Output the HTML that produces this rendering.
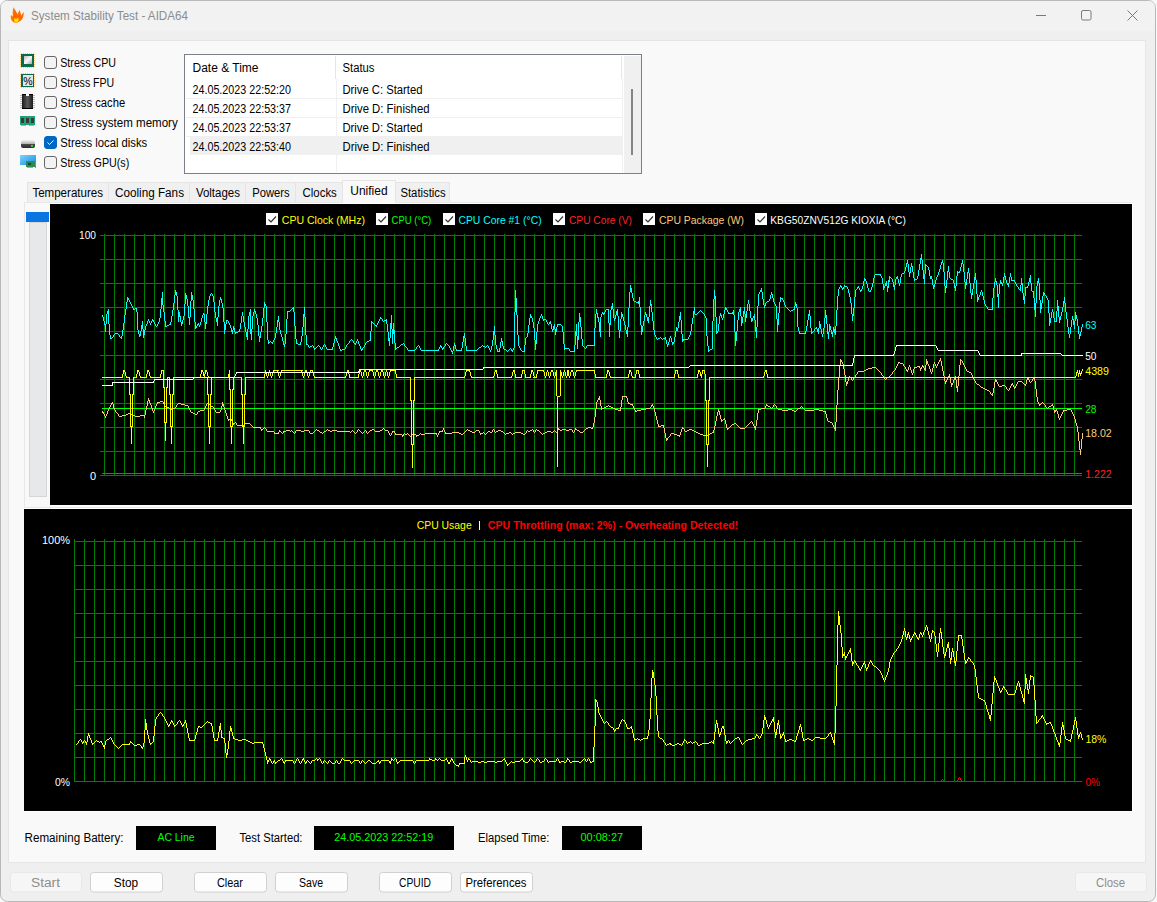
<!DOCTYPE html>
<html><head><meta charset="utf-8"><title>System Stability Test - AIDA64</title>
<style>html,body{margin:0;padding:0;background:#f8f8f8;width:1157px;height:902px;overflow:hidden}
svg{display:block;font-family:"Liberation Sans",sans-serif}</style></head>
<body><svg width="1157" height="902" viewBox="0 0 1157 902">
<rect x="0" y="0" width="1157" height="902" fill="#f8f8f8"/>
<rect x="0.5" y="0.5" width="1155" height="901" rx="7" ry="7" fill="#efefef" stroke="#b9b9b9" stroke-width="1"/>
<path d="M1,31 L1,8 Q1,1 8,1 L1148,1 Q1155,1 1155,8 L1155,31 Z" fill="#f2f2f2"/>
<path d="M16,23 C12,22.5 10,19 11,15 L13,16.5 C12.3,12.5 12.8,9.5 13.6,7.3 C15,10 17,12 17.2,14.5 C18,12.5 19,11 20,10 C20,12 20.7,13.5 21,15.5 L23.6,12 C24.5,16.5 22,21.5 16,23 Z" fill="#ff7a00"/>
<path d="M13.5,16 C14,13 14.5,11 14.2,9.5 C16,12 17.5,14 17.5,16 C19,14 20,13 20.2,12 C21,15 21.5,17 21,18 L22.8,15 C23,19 20,22 16,22.5 C13,22 12,19 13.5,16 Z" fill="#ff5500" opacity="0.6"/>
<path d="M16,22.8 C14,22.5 13.5,20 14.5,18 C15.5,19 17,19 18,17.5 C19,19 19.5,21.5 16,22.8 Z" fill="#ffe000"/>
<text x="31" y="20.3" font-size="13" fill="#8c8c8c" textLength="157" lengthAdjust="spacingAndGlyphs" >System Stability Test - AIDA64</text>
<rect x="1036" y="15" width="10" height="1" fill="#7a7a7a" />
<rect x="1081.5" y="10.5" width="9.5" height="9.5" rx="1.5" fill="none" stroke="#7a7a7a" stroke-width="1"/>
<path d="M1127.5,10.5 L1137.5,20.5 M1137.5,10.5 L1127.5,20.5" stroke="#7a7a7a" stroke-width="1"/>
<rect x="8.5" y="40.5" width="1137" height="822" fill="#f9f9f9" stroke="#e5e5e5" stroke-width="1"/>
<rect x="44.5" y="56.5" width="12" height="12" rx="2.5" fill="#f3f3f3" stroke="#666" stroke-width="1"/>
<text x="60.25" y="67.2" font-size="12" fill="#000" textLength="55.75" lengthAdjust="spacingAndGlyphs" >Stress CPU</text>
<rect x="44.5" y="76.5" width="12" height="12" rx="2.5" fill="#f3f3f3" stroke="#666" stroke-width="1"/>
<text x="60.25" y="87.2" font-size="12" fill="#000" textLength="54" lengthAdjust="spacingAndGlyphs" >Stress FPU</text>
<rect x="44.5" y="96.5" width="12" height="12" rx="2.5" fill="#f3f3f3" stroke="#666" stroke-width="1"/>
<text x="60.25" y="107.2" font-size="12" fill="#000" textLength="65" lengthAdjust="spacingAndGlyphs" >Stress cache</text>
<rect x="44.5" y="116.5" width="12" height="12" rx="2.5" fill="#f3f3f3" stroke="#666" stroke-width="1"/>
<text x="60.25" y="127.2" font-size="12" fill="#000" textLength="117.5" lengthAdjust="spacingAndGlyphs" >Stress system memory</text>
<rect x="44.5" y="136.5" width="12" height="12" rx="2.5" fill="#0067c0" stroke="#0067c0"/>
<path d="M47.5,142.5 L49.5,144.5 L53.5,140.5" fill="none" stroke="#fff" stroke-width="1"/>
<text x="60.25" y="147.2" font-size="12" fill="#000" textLength="87" lengthAdjust="spacingAndGlyphs" >Stress local disks</text>
<rect x="44.5" y="156.5" width="12" height="12" rx="2.5" fill="#f3f3f3" stroke="#666" stroke-width="1"/>
<text x="60.25" y="167.2" font-size="12" fill="#000" textLength="69" lengthAdjust="spacingAndGlyphs" >Stress GPU(s)</text>
<defs><linearGradient id="gcpu" x1="0" y1="0" x2="1" y2="1"><stop offset="0" stop-color="#bdbdbd"/><stop offset="0.5" stop-color="#f6f6f6"/><stop offset="1" stop-color="#a8a8a8"/></linearGradient><linearGradient id="gchip" x1="0" y1="0" x2="1" y2="0"><stop offset="0" stop-color="#1a1a1a"/><stop offset="0.5" stop-color="#5a5a5a"/><stop offset="1" stop-color="#1a1a1a"/></linearGradient><linearGradient id="gdisk" x1="0" y1="0" x2="0" y2="1"><stop offset="0" stop-color="#f4f4f4"/><stop offset="0.5" stop-color="#b0b0b0"/><stop offset="0.55" stop-color="#4a4a4a"/><stop offset="1" stop-color="#2a2a2a"/></linearGradient><linearGradient id="gmon" x1="0" y1="0" x2="1" y2="1"><stop offset="0" stop-color="#7fd0ff"/><stop offset="1" stop-color="#1090e0"/></linearGradient></defs>
<rect x="20" y="53" width="15" height="15" fill="#f0a030" opacity="0.55"/>
<path d="M20.5,53V68 M34.5,53V68 M20,53.5H35 M20,67.5H35" stroke="#f9f9f9" stroke-width="1" stroke-dasharray="1,1"/>
<rect x="21" y="54" width="13" height="13" fill="#0b6a4a"/>
<rect x="20" y="73" width="15" height="15" fill="#f0a030" opacity="0.55"/>
<path d="M20.5,73V88 M34.5,73V88 M20,73.5H35 M20,87.5H35" stroke="#f9f9f9" stroke-width="1" stroke-dasharray="1,1"/>
<rect x="21" y="74" width="13" height="13" fill="#0b6a4a"/>
<rect x="24" y="56" width="8" height="8" fill="url(#gcpu)"/>
<rect x="23" y="75" width="10" height="11" fill="#e6e6e6"/>
<text x="23.2" y="84.6" font-size="11" fill="#000" textLength="9.4" lengthAdjust="spacingAndGlyphs">%</text>
<path d="M21.5,95V108 M33.5,95V108" stroke="#ffffff" stroke-width="1" stroke-dasharray="1,1"/>
<path d="M21,95V108 M34,95V108" stroke="#222" stroke-width="0.6" stroke-dasharray="1,1"/>
<rect x="22" y="94" width="11" height="15" fill="url(#gchip)"/>
<rect x="22" y="94" width="11" height="1" fill="#000"/><rect x="22" y="108" width="11" height="1" fill="#000"/>
<rect x="26" y="94" width="3" height="2" fill="#f9f9f9"/>
<rect x="20" y="116" width="15" height="9" fill="#22a078"/>
<rect x="21" y="118" width="3" height="5" fill="#3a3a3a"/><rect x="26" y="118" width="3" height="5" fill="#3a3a3a"/><rect x="31" y="118" width="3" height="5" fill="#3a3a3a"/>
<rect x="21" y="125" width="5" height="1" fill="#d9a84a"/><rect x="29" y="125" width="5" height="1" fill="#d9a84a"/>
<rect x="21" y="140" width="14" height="8" rx="2" fill="url(#gdisk)"/>
<rect x="31" y="145" width="2" height="2" fill="#20e020"/>
<rect x="20" y="155" width="16" height="10" fill="url(#gmon)"/>
<rect x="26" y="161" width="10" height="6" fill="#2a8a5a"/>
<rect x="28" y="163" width="3" height="2" fill="#144a2a"/>
<rect x="27" y="167" width="6" height="1" fill="#f0a020"/>
<rect x="35" y="160" width="1" height="8" fill="#888"/>
<rect x="184.5" y="54.5" width="457" height="119" fill="#ffffff" stroke="#7c808a" stroke-width="1"/>
<rect x="624" y="56" width="17" height="117" fill="#f0f0f0" />
<rect x="631" y="89" width="2" height="66" fill="#858585" />
<rect x="335" y="56" width="1" height="23" fill="#e5e5e5" />
<rect x="621" y="56" width="1" height="23" fill="#e5e5e5" />
<rect x="336" y="79" width="1" height="93" fill="#f0f0f0" />
<rect x="622" y="79" width="1" height="93" fill="#f0f0f0" />
<text x="192.5" y="72" font-size="12" fill="#000" textLength="66" lengthAdjust="spacingAndGlyphs" >Date &amp; Time</text>
<text x="342.5" y="72" font-size="12" fill="#000" textLength="32" lengthAdjust="spacingAndGlyphs" >Status</text>
<rect x="186" y="98" width="436" height="1" fill="#efefef" />
<text x="192.5" y="93.8" font-size="12" fill="#000" textLength="98.5" lengthAdjust="spacingAndGlyphs" >24.05.2023 22:52:20</text>
<text x="342.5" y="93.8" font-size="12" fill="#000" textLength="80" lengthAdjust="spacingAndGlyphs" >Drive C: Started</text>
<rect x="186" y="117" width="436" height="1" fill="#efefef" />
<text x="192.5" y="112.8" font-size="12" fill="#000" textLength="98.5" lengthAdjust="spacingAndGlyphs" >24.05.2023 22:53:37</text>
<text x="342.5" y="112.8" font-size="12" fill="#000" textLength="87" lengthAdjust="spacingAndGlyphs" >Drive D: Finished</text>
<rect x="186" y="136" width="436" height="1" fill="#efefef" />
<text x="192.5" y="131.8" font-size="12" fill="#000" textLength="98.5" lengthAdjust="spacingAndGlyphs" >24.05.2023 22:53:37</text>
<text x="342.5" y="131.8" font-size="12" fill="#000" textLength="80" lengthAdjust="spacingAndGlyphs" >Drive D: Started</text>
<rect x="190" y="136" width="432" height="19" fill="#f0f0f0" />
<text x="192.5" y="150.8" font-size="12" fill="#000" textLength="98.5" lengthAdjust="spacingAndGlyphs" >24.05.2023 22:53:40</text>
<text x="342.5" y="150.8" font-size="12" fill="#000" textLength="87" lengthAdjust="spacingAndGlyphs" >Drive D: Finished</text>
<rect x="27.5" y="182.5" width="81" height="21" fill="#f0f0f0" stroke="#e5e5e5"/>
<text x="32.4" y="197" font-size="12" fill="#000" textLength="70.6" lengthAdjust="spacingAndGlyphs" >Temperatures</text>
<rect x="108.5" y="182.5" width="81" height="21" fill="#f0f0f0" stroke="#e5e5e5"/>
<text x="115" y="197" font-size="12" fill="#000" textLength="69" lengthAdjust="spacingAndGlyphs" >Cooling Fans</text>
<rect x="189.5" y="182.5" width="56" height="21" fill="#f0f0f0" stroke="#e5e5e5"/>
<text x="195.9" y="197" font-size="12" fill="#000" textLength="44.1" lengthAdjust="spacingAndGlyphs" >Voltages</text>
<rect x="245.5" y="182.5" width="50" height="21" fill="#f0f0f0" stroke="#e5e5e5"/>
<text x="252.3" y="197" font-size="12" fill="#000" textLength="37.3" lengthAdjust="spacingAndGlyphs" >Powers</text>
<rect x="295.5" y="182.5" width="47" height="21" fill="#f0f0f0" stroke="#e5e5e5"/>
<text x="302.6" y="197" font-size="12" fill="#000" textLength="34.2" lengthAdjust="spacingAndGlyphs" >Clocks</text>
<rect x="342.5" y="180.5" width="53" height="24" fill="#f9f9f9" stroke="#e5e5e5"/>
<text x="350.3" y="195" font-size="12" fill="#000" textLength="37.3" lengthAdjust="spacingAndGlyphs" >Unified</text>
<rect x="395.5" y="182.5" width="54" height="21" fill="#f0f0f0" stroke="#e5e5e5"/>
<text x="400.4" y="197" font-size="12" fill="#000" textLength="45.3" lengthAdjust="spacingAndGlyphs" >Statistics</text>
<rect x="24.5" y="202.5" width="1106" height="305" fill="#f9f9f9" stroke="#e8e8e8"/>
<rect x="343" y="202" width="52" height="2" fill="#f9f9f9" />
<rect x="50" y="203" width="1083" height="1" fill="#ffffff" />
<rect x="26" y="212" width="23" height="10" fill="#0a74e0" />
<rect x="29.5" y="222.5" width="17" height="274" fill="#e6e9ea" stroke="#d6d6d6"/>
<rect x="50" y="204" width="1082" height="301" fill="#000" />
<rect x="1132" y="204" width="1" height="302" fill="#fff" />
<rect x="50" y="505" width="1083" height="1" fill="#fff" />
<path d="M100,235.5H1082 M100,259.5H1082 M100,283.5H1082 M100,307.5H1082 M100,331.5H1082 M100,355.5H1082 M100,379.5H1082 M100,403.5H1082 M100,427.5H1082 M100,451.5H1082 M100,475.5H1082 M104.5,234V476 M114.5,234V476 M124.5,234V476 M134.5,234V476 M144.5,234V476 M154.5,234V476 M164.5,234V476 M174.5,234V476 M184.5,234V476 M194.5,234V476 M204.5,234V476 M214.5,234V476 M224.5,234V476 M234.5,234V476 M244.5,234V476 M254.5,234V476 M264.5,234V476 M274.5,234V476 M284.5,234V476 M294.5,234V476 M304.5,234V476 M314.5,234V476 M324.5,234V476 M334.5,234V476 M344.5,234V476 M354.5,234V476 M364.5,234V476 M374.5,234V476 M384.5,234V476 M394.5,234V476 M404.5,234V476 M414.5,234V476 M424.5,234V476 M434.5,234V476 M444.5,234V476 M454.5,234V476 M464.5,234V476 M474.5,234V476 M484.5,234V476 M494.5,234V476 M504.5,234V476 M514.5,234V476 M524.5,234V476 M534.5,234V476 M544.5,234V476 M554.5,234V476 M564.5,234V476 M574.5,234V476 M584.5,234V476 M594.5,234V476 M604.5,234V476 M614.5,234V476 M624.5,234V476 M634.5,234V476 M644.5,234V476 M654.5,234V476 M664.5,234V476 M674.5,234V476 M684.5,234V476 M694.5,234V476 M704.5,234V476 M714.5,234V476 M724.5,234V476 M734.5,234V476 M744.5,234V476 M754.5,234V476 M764.5,234V476 M774.5,234V476 M784.5,234V476 M794.5,234V476 M804.5,234V476 M814.5,234V476 M824.5,234V476 M834.5,234V476 M844.5,234V476 M854.5,234V476 M864.5,234V476 M874.5,234V476 M884.5,234V476 M894.5,234V476 M904.5,234V476 M914.5,234V476 M924.5,234V476 M934.5,234V476 M944.5,234V476 M954.5,234V476 M964.5,234V476 M974.5,234V476 M984.5,234V476 M994.5,234V476 M1004.5,234V476 M1014.5,234V476 M1024.5,234V476 M1034.5,234V476 M1044.5,234V476 M1054.5,234V476 M1064.5,234V476 M1074.5,234V476" stroke="#008000" stroke-width="1" shape-rendering="crispEdges"/>
<rect x="266" y="213" width="12" height="12" fill="#ffffff"/>
<path d="M268.5,219.5 L271,222 L276,216.5" fill="none" stroke="#333" stroke-width="1.2"/>
<text x="281.8" y="224" font-size="10.5" fill="#ffff00" textLength="83.2" lengthAdjust="spacingAndGlyphs" >CPU Clock (MHz)</text>
<rect x="376" y="213" width="12" height="12" fill="#ffffff"/>
<path d="M378.5,219.5 L381,222 L386,216.5" fill="none" stroke="#333" stroke-width="1.2"/>
<text x="391.6" y="224" font-size="10.5" fill="#00ff00" textLength="39.6" lengthAdjust="spacingAndGlyphs" >CPU (°C)</text>
<rect x="443" y="213" width="12" height="12" fill="#ffffff"/>
<path d="M445.5,219.5 L448,222 L453,216.5" fill="none" stroke="#333" stroke-width="1.2"/>
<text x="458.4" y="224" font-size="10.5" fill="#00ffff" textLength="83.2" lengthAdjust="spacingAndGlyphs" >CPU Core #1 (°C)</text>
<rect x="553" y="213" width="12" height="12" fill="#ffffff"/>
<path d="M555.5,219.5 L558,222 L563,216.5" fill="none" stroke="#333" stroke-width="1.2"/>
<text x="569" y="224" font-size="10.5" fill="#ff2020" textLength="62.9" lengthAdjust="spacingAndGlyphs" >CPU Core (V)</text>
<rect x="643" y="213" width="12" height="12" fill="#ffffff"/>
<path d="M645.5,219.5 L648,222 L653,216.5" fill="none" stroke="#333" stroke-width="1.2"/>
<text x="659" y="224" font-size="10.5" fill="#ffc878" textLength="85" lengthAdjust="spacingAndGlyphs" >CPU Package (W)</text>
<rect x="755" y="213" width="12" height="12" fill="#ffffff"/>
<path d="M757.5,219.5 L760,222 L765,216.5" fill="none" stroke="#333" stroke-width="1.2"/>
<text x="770.3" y="224" font-size="10.5" fill="#ffffff" textLength="135.5" lengthAdjust="spacingAndGlyphs" >KBG50ZNV512G KIOXIA (°C)</text>
<text x="96" y="239" font-size="11" fill="#fff" textLength="17" lengthAdjust="spacingAndGlyphs" text-anchor="end" >100</text>
<text x="96" y="480" font-size="11" fill="#fff" text-anchor="end" >0</text>
<text x="1085.2" y="329" font-size="11" fill="#00ffff" textLength="11.3" lengthAdjust="spacingAndGlyphs" >63</text>
<text x="1085.2" y="360" font-size="11" fill="#ffffff" textLength="11.3" lengthAdjust="spacingAndGlyphs" >50</text>
<text x="1085.2" y="375" font-size="11" fill="#ffff00" textLength="23.8" lengthAdjust="spacingAndGlyphs" >4389</text>
<text x="1085.2" y="413" font-size="11" fill="#00ff00" textLength="11.3" lengthAdjust="spacingAndGlyphs" >28</text>
<text x="1085.2" y="437" font-size="11" fill="#ffc878" textLength="26.6" lengthAdjust="spacingAndGlyphs" >18.02</text>
<text x="1085.2" y="478" font-size="11" fill="#ff2020" textLength="26.6" lengthAdjust="spacingAndGlyphs" >1.222</text>
<rect x="102" y="473" width="980" height="1" fill="#ff2020"/>
<rect x="102" y="408" width="980" height="1" fill="#00ff00"/>
<path d="M267 431h7v1h-7zM279 431h2v1h-2zM283 431h3v1h-3zM301 431h3v1h-3zM324 431h2v1h-2zM330 431h2v1h-2zM337 431h13v1h-13zM375 431h5v1h-5zM392 431h3v1h-3zM439 431h4v1h-4zM470 431h2v1h-2zM488 431h2v1h-2zM496 431h2v1h-2zM501 431h2v1h-2zM528 431h2v1h-2zM547 431h4v1h-4zM685 431h2v1h-2zM694 431h2v1h-2zM237 425h7v1h-7zM661 425h3v1h-3zM274 433h5v1h-5zM310 433h3v1h-3zM425 433h12v1h-12zM445 433h7v1h-7zM459 433h2v1h-2zM480 433h3v1h-3zM506 433h3v1h-3zM513 433h2v1h-2zM521 433h2v1h-2zM543 433h2v1h-2zM671 433h3v1h-3zM698 433h2v1h-2zM710 433h2v1h-2zM956 386h2v1h-2zM999 386h3v1h-3zM849 377h2v1h-2zM887 377h2v1h-2zM119 416h3v1h-3zM135 416h5v1h-5zM917 366h3v1h-3zM922 366h2v1h-2zM165 406h2v1h-2zM211 406h2v1h-2zM606 406h2v1h-2zM609 406h2v1h-2zM768 406h2v1h-2zM1049 406h2v1h-2zM200 410h4v1h-4zM618 410h3v1h-3zM637 410h4v1h-4zM782 410h6v1h-6zM792 410h2v1h-2zM805 410h9v1h-9zM819 410h4v1h-4zM1054 410h3v1h-3zM1063 410h4v1h-4zM864 370h2v1h-2zM906 370h2v1h-2zM253 427h8v1h-8zM588 427h3v1h-3zM754 427h2v1h-2zM834 427h2v1h-2zM181 404h4v1h-4zM208 404h2v1h-2zM222 404h2v1h-2zM630 404h3v1h-3zM1039 404h2v1h-2zM830 422h2v1h-2zM320 432h2v1h-2zM452 432h7v1h-7zM472 432h3v1h-3zM490 432h2v1h-2zM509 432h2v1h-2zM515 432h6v1h-6zM545 432h2v1h-2zM551 432h2v1h-2zM580 432h3v1h-3zM696 432h2v1h-2zM712 432h2v1h-2zM666 438h2v1h-2zM658 426h3v1h-3zM754 426h2v1h-2zM395 434h7v1h-7zM405 434h2v1h-2zM412 434h4v1h-4zM421 434h4v1h-4zM461 434h2v1h-2zM523 434h2v1h-2zM674 434h3v1h-3zM700 434h3v1h-3zM708 434h2v1h-2zM900 363h3v1h-3zM926 363h2v1h-2zM122 415h4v1h-4zM132 415h3v1h-3zM140 415h5v1h-5zM866 369h2v1h-2zM924 369h2v1h-2zM111 403h2v1h-2zM178 403h3v1h-3zM628 403h2v1h-2zM586 428h2v1h-2zM591 428h2v1h-2zM682 428h2v1h-2zM727 428h2v1h-2zM740 428h5v1h-5zM834 428h2v1h-2zM102 412h2v1h-2zM191 412h2v1h-2zM216 412h4v1h-4zM995 380h2v1h-2zM868 368h4v1h-4zM920 368h2v1h-2zM924 368h2v1h-2zM128 413h2v1h-2zM193 413h2v1h-2zM840 360h2v1h-2zM939 360h2v1h-2zM960 360h2v1h-2zM171 409h2v1h-2zM615 409h3v1h-3zM641 409h5v1h-5zM758 409h3v1h-3zM778 409h4v1h-4zM788 409h4v1h-4zM814 409h5v1h-5zM1067 409h4v1h-4zM985 389h2v1h-2zM286 430h4v1h-4zM296 430h5v1h-5zM304 430h5v1h-5zM317 430h2v1h-2zM328 430h2v1h-2zM332 430h5v1h-5zM370 430h2v1h-2zM380 430h2v1h-2zM385 430h3v1h-3zM468 430h2v1h-2zM476 430h3v1h-3zM498 430h3v1h-3zM530 430h2v1h-2zM537 430h2v1h-2zM560 430h2v1h-2zM566 430h3v1h-3zM577 430h2v1h-2zM687 430h2v1h-2zM692 430h2v1h-2zM233 423h2v1h-2zM244 423h6v1h-6zM734 423h2v1h-2zM948 376h2v1h-2zM185 405h3v1h-3zM222 405h2v1h-2zM651 405h2v1h-2zM766 405h2v1h-2zM1051 405h2v1h-2zM732 424h2v1h-2zM969 372h2v1h-2zM956 387h2v1h-2zM981 387h2v1h-2zM1014 387h2v1h-2zM1079 449h2v1h-2zM858 371h6v1h-6zM967 371h2v1h-2zM261 429h2v1h-2zM372 429h2v1h-2zM558 429h2v1h-2zM562 429h4v1h-4zM569 429h3v1h-3zM575 429h2v1h-2zM689 429h3v1h-3zM846 383h2v1h-2zM951 383h2v1h-2zM228 419h2v1h-2zM723 419h2v1h-2zM126 414h2v1h-2zM130 414h2v1h-2zM195 414h2v1h-2zM846 382h2v1h-2zM945 381h2v1h-2zM995 381h2v1h-2zM1018 381h4v1h-4zM991 394h2v1h-2zM157 402h3v1h-3zM951 384h2v1h-2zM977 384h2v1h-2zM1011 384h2v1h-2zM1024 384h2v1h-2zM987 390h2v1h-2zM198 411h2v1h-2zM635 411h2v1h-2zM718 411h2v1h-2zM794 411h2v1h-2zM823 411h3v1h-3zM1054 411h2v1h-2zM167 407h2v1h-2zM604 407h2v1h-2zM611 407h2v1h-2zM721 420h2v1h-2zM160 401h3v1h-3zM622 396h5v1h-5zM666 439h2v1h-2zM169 408h2v1h-2zM173 408h2v1h-2zM601 408h3v1h-3zM613 408h2v1h-2zM646 408h4v1h-4zM761 408h4v1h-4zM798 408h2v1h-2zM828 421h2v1h-2zM598 399h2v1h-2zM898 362h2v1h-2zM926 362h2v1h-2zM954 378h2v1h-2zM1027 378h2v1h-2zM1033 378h2v1h-2zM402 435h2v1h-2zM416 435h3v1h-3zM677 435h3v1h-3zM703 435h5v1h-5zM983 388h2v1h-2zM872 367h4v1h-4zM914 367h3v1h-3zM1002 385h3v1h-3zM954 379h2v1h-2zM1027 379h2v1h-2zM840 361h2v1h-2zM926 361h2v1h-2zM598 398h2v1h-2zM148 400h2v1h-2zM492 430h1v2h-1zM1026 380h1v4h-1zM835 422h1v5h-1zM835 429h1v2h-1zM668 437h1v1h-1zM1045 405h1v2h-1zM1037 397h1v5h-1zM1078 432h1v9h-1zM114 408h1v2h-1zM721 419h1v1h-1zM721 421h1v1h-1zM1048 407h1v1h-1zM913 369h1v4h-1zM905 367h1v2h-1zM756 420h1v6h-1zM1011 385h1v1h-1zM1082 433h1v6h-1zM717 412h1v4h-1zM714 426h1v4h-1zM600 400h1v6h-1zM1052 404h1v1h-1zM1081 439h1v10h-1zM855 375h1v2h-1zM1060 416h1v2h-1zM1034 377h1v1h-1zM1034 379h1v2h-1zM958 376h1v10h-1zM942 366h1v5h-1zM382 429h1v1h-1zM1041 403h1v1h-1zM840 359h1v1h-1zM840 362h1v4h-1zM751 421h1v1h-1zM110 405h1v2h-1zM322 433h1v1h-1zM596 402h1v7h-1zM444 430h1v2h-1zM771 408h1v1h-1zM102 411h1v1h-1zM1074 416h1v3h-1zM774 404h1v1h-1zM920 369h1v2h-1zM943 371h1v5h-1zM752 422h1v2h-1zM912 373h1v2h-1zM657 420h1v4h-1zM775 405h1v1h-1zM932 368h1v4h-1zM713 430h1v2h-1zM800 407h1v1h-1zM368 432h1v1h-1zM420 433h1v1h-1zM653 406h1v2h-1zM725 420h1v4h-1zM151 405h1v3h-1zM844 369h1v6h-1zM265 428h1v1h-1zM204 408h1v2h-1zM957 388h1v4h-1zM1044 404h1v1h-1zM656 416h1v4h-1zM664 428h1v5h-1zM279 430h1v1h-1zM113 404h1v4h-1zM950 377h1v6h-1zM1077 426h1v6h-1zM962 361h1v2h-1zM881 373h1v2h-1zM892 372h1v2h-1zM595 409h1v8h-1zM1058 414h1v4h-1zM827 418h1v3h-1zM105 416h1v2h-1zM147 401h1v5h-1zM843 364h1v5h-1zM534 432h1v1h-1zM885 379h1v1h-1zM283 432h1v1h-1zM938 362h1v2h-1zM264 427h1v1h-1zM146 406h1v4h-1zM908 367h1v3h-1zM826 414h1v4h-1zM1025 385h1v1h-1zM177 404h1v1h-1zM313 432h1v1h-1zM839 366h1v12h-1zM1039 405h1v1h-1zM965 367h1v2h-1zM116 412h1v1h-1zM222 402h1v2h-1zM553 431h1v1h-1zM746 426h1v1h-1zM854 377h1v1h-1zM526 431h1v2h-1zM766 404h1v1h-1zM117 413h1v1h-1zM1059 418h1v2h-1zM1080 450h1v5h-1zM946 380h1v1h-1zM404 433h1v1h-1zM994 382h1v6h-1zM226 413h1v3h-1zM931 372h1v2h-1zM594 417h1v6h-1zM838 378h1v12h-1zM104 414h1v2h-1zM572 430h1v2h-1zM583 431h1v1h-1zM720 415h1v4h-1zM889 376h1v1h-1zM355 433h1v1h-1zM1036 389h1v8h-1zM511 433h1v1h-1zM956 380h1v6h-1zM155 406h1v3h-1zM556 432h1v1h-1zM533 430h1v2h-1zM439 432h1v1h-1zM670 434h1v2h-1zM1032 379h1v2h-1zM359 430h1v1h-1zM945 382h1v2h-1zM682 427h1v1h-1zM738 426h1v1h-1zM715 421h1v5h-1zM1010 386h1v2h-1zM919 367h1v1h-1zM833 425h1v2h-1zM716 416h1v5h-1zM911 370h1v3h-1zM351 431h1v1h-1zM719 412h1v3h-1zM739 427h1v1h-1zM857 372h1v2h-1zM655 412h1v4h-1zM1046 407h1v1h-1zM964 365h1v2h-1zM115 410h1v2h-1zM626 397h1v1h-1zM363 432h1v1h-1zM260 428h1v1h-1zM1047 408h1v1h-1zM995 379h1v1h-1zM953 380h1v3h-1zM937 364h1v2h-1zM599 396h1v2h-1zM757 413h1v7h-1zM895 368h1v2h-1zM358 429h1v1h-1zM621 400h1v7h-1zM884 377h1v2h-1zM949 374h1v2h-1zM930 369h1v3h-1zM979 385h1v1h-1zM750 422h1v1h-1zM665 433h1v5h-1zM540 432h1v1h-1zM278 432h1v1h-1zM658 424h1v2h-1zM776 406h1v2h-1zM407 433h1v1h-1zM914 368h1v1h-1zM541 433h1v1h-1zM1079 441h1v8h-1zM765 406h1v2h-1zM777 408h1v1h-1zM926 359h1v2h-1zM926 364h1v1h-1zM681 429h1v3h-1zM408 434h1v1h-1zM419 434h1v1h-1zM1061 414h1v2h-1zM652 404h1v1h-1zM998 384h1v2h-1zM150 403h1v2h-1zM876 368h1v1h-1zM1029 380h1v2h-1zM1073 414h1v2h-1zM758 410h1v3h-1zM845 375h1v7h-1zM963 363h1v2h-1zM411 435h1v1h-1zM877 369h1v1h-1zM1035 381h1v8h-1zM944 376h1v5h-1zM993 388h1v5h-1zM730 426h1v1h-1zM941 361h1v5h-1zM773 405h1v2h-1zM281 432h1v1h-1zM438 433h1v2h-1zM1057 411h1v3h-1zM1076 423h1v3h-1zM207 403h1v1h-1zM975 381h1v2h-1zM933 364h1v4h-1zM680 432h1v3h-1zM837 390h1v15h-1zM282 433h1v1h-1zM601 406h1v2h-1zM601 409h1v1h-1zM483 432h1v1h-1zM366 431h1v2h-1zM1009 388h1v2h-1zM959 365h1v11h-1zM225 410h1v3h-1zM233 424h1v1h-1zM244 424h1v1h-1zM654 408h1v4h-1zM853 378h1v2h-1zM960 359h1v1h-1zM960 361h1v4h-1zM266 429h1v2h-1zM445 432h1v1h-1zM593 423h1v4h-1zM156 404h1v2h-1zM836 405h1v17h-1zM145 410h1v5h-1zM997 382h1v2h-1zM891 374h1v1h-1zM955 376h1v2h-1zM357 430h1v2h-1zM221 406h1v4h-1zM149 401h1v2h-1zM934 362h1v2h-1zM1038 402h1v2h-1zM1072 412h1v2h-1zM1053 406h1v4h-1zM464 432h1v1h-1zM118 414h1v2h-1zM1031 381h1v1h-1zM536 429h1v1h-1zM319 431h1v1h-1zM236 423h1v2h-1zM144 416h1v2h-1zM176 405h1v2h-1zM164 404h1v2h-1zM573 432h1v1h-1zM326 430h1v1h-1zM388 431h1v2h-1zM365 430h1v1h-1zM620 407h1v3h-1zM224 407h1v3h-1zM232 421h1v2h-1zM494 430h1v2h-1zM748 424h1v1h-1zM684 429h1v2h-1zM925 365h1v3h-1zM925 370h1v1h-1zM391 433h1v2h-1zM745 427h1v1h-1zM718 409h1v2h-1zM627 398h1v4h-1zM992 393h1v1h-1zM992 395h1v1h-1zM214 408h1v2h-1zM403 434h1v1h-1zM910 367h1v3h-1zM206 404h1v2h-1zM679 436h1v1h-1zM585 429h1v1h-1zM228 420h1v1h-1zM974 379h1v2h-1zM849 376h1v1h-1zM190 410h1v2h-1zM163 402h1v2h-1zM107 411h1v3h-1zM669 436h1v1h-1zM898 363h1v1h-1zM592 427h1v1h-1zM360 431h1v1h-1zM726 424h1v4h-1zM929 366h1v3h-1zM1056 409h1v1h-1zM1075 419h1v4h-1zM848 378h1v3h-1zM361 432h1v1h-1zM1015 386h1v1h-1zM220 410h1v2h-1zM295 431h1v2h-1zM261 430h1v1h-1zM437 435h1v2h-1zM936 366h1v2h-1zM323 432h1v1h-1zM894 370h1v1h-1zM1071 410h1v2h-1zM410 436h1v1h-1zM383 428h1v1h-1zM878 370h1v1h-1zM729 427h1v1h-1zM235 422h1v1h-1zM227 416h1v3h-1zM291 430h1v1h-1zM879 371h1v1h-1zM197 412h1v2h-1zM292 431h1v1h-1zM314 431h1v1h-1zM189 408h1v2h-1zM512 434h1v1h-1zM443 428h1v2h-1zM390 435h1v1h-1zM980 386h1v1h-1zM231 419h1v2h-1zM940 358h1v2h-1zM1063 411h1v1h-1zM466 430h1v1h-1zM886 378h1v1h-1zM152 408h1v3h-1zM856 374h1v1h-1zM250 424h1v1h-1zM542 434h1v1h-1zM436 434h1v1h-1zM935 364h1v2h-1zM409 435h1v1h-1zM535 430h1v2h-1zM622 397h1v3h-1zM966 369h1v2h-1zM797 409h1v1h-1zM1030 382h1v1h-1zM109 407h1v2h-1zM663 426h1v2h-1zM897 364h1v2h-1zM148 398h1v2h-1zM634 408h1v2h-1zM801 406h1v1h-1zM909 365h1v2h-1zM973 377h1v2h-1zM352 430h1v1h-1zM1014 388h1v1h-1zM394 432h1v1h-1zM367 433h1v1h-1zM755 428h1v2h-1zM493 429h1v1h-1zM485 434h1v1h-1zM356 432h1v1h-1zM223 406h1v1h-1zM736 424h1v1h-1zM557 430h1v2h-1zM215 410h1v2h-1zM154 409h1v2h-1zM1006 387h1v2h-1zM1007 389h1v1h-1zM976 383h1v1h-1zM724 418h1v1h-1zM389 433h1v2h-1zM851 378h1v2h-1zM727 429h1v1h-1zM484 433h1v1h-1zM882 375h1v1h-1zM747 425h1v1h-1zM1013 385h1v2h-1zM847 381h1v1h-1zM1022 382h1v1h-1zM846 384h1v2h-1zM527 430h1v1h-1zM923 367h1v1h-1zM230 418h1v1h-1zM525 433h1v1h-1zM108 409h1v2h-1zM893 371h1v1h-1zM503 432h1v1h-1zM633 406h1v2h-1zM939 361h1v1h-1zM1062 412h1v2h-1zM309 431h1v2h-1zM972 375h1v2h-1zM374 430h1v1h-1zM666 440h1v1h-1zM188 406h1v2h-1zM651 406h1v1h-1zM293 432h1v1h-1zM263 428h1v1h-1zM904 366h1v1h-1zM442 430h1v1h-1zM1017 382h1v2h-1zM294 433h1v1h-1zM990 392h1v2h-1zM350 432h1v1h-1zM495 432h1v1h-1zM153 411h1v2h-1zM896 366h1v2h-1zM579 431h1v1h-1zM362 433h1v1h-1zM731 425h1v1h-1zM770 407h1v1h-1zM480 434h1v1h-1zM1005 386h1v1h-1zM290 431h1v1h-1zM796 410h1v1h-1zM274 432h1v1h-1zM903 364h1v2h-1zM475 431h1v1h-1zM369 431h1v1h-1zM632 405h1v1h-1zM487 432h1v1h-1zM907 371h1v1h-1zM971 373h1v2h-1zM112 402h1v1h-1zM465 431h1v1h-1zM803 408h1v1h-1zM922 365h1v1h-1zM575 428h1v1h-1zM753 424h1v2h-1zM804 409h1v1h-1zM989 391h1v1h-1zM948 377h1v1h-1zM252 426h1v1h-1zM316 429h1v1h-1zM327 429h1v1h-1zM1042 402h1v1h-1zM772 407h1v1h-1zM1027 377h1v1h-1zM1043 403h1v1h-1zM749 423h1v1h-1zM384 429h1v1h-1zM1054 412h1v1h-1zM1016 384h1v2h-1zM880 372h1v1h-1zM1008 390h1v1h-1zM558 428h1v1h-1zM802 407h1v1h-1zM842 362h1v2h-1zM402 436h1v1h-1zM1012 383h1v1h-1zM395 433h1v1h-1zM532 429h1v1h-1zM251 425h1v1h-1zM479 431h1v2h-1zM825 412h1v2h-1zM210 405h1v1h-1zM106 414h1v2h-1zM574 430h1v2h-1zM628 402h1v1h-1zM213 407h1v1h-1zM111 404h1v1h-1zM635 410h1v1h-1zM175 407h1v1h-1zM392 432h1v1h-1zM921 367h1v1h-1zM353 431h1v1h-1zM364 431h1v1h-1zM951 385h1v2h-1zM597 400h1v2h-1zM554 430h1v1h-1zM852 380h1v1h-1zM354 432h1v1h-1zM157 403h1v1h-1zM555 431h1v1h-1zM883 376h1v1h-1zM947 378h1v2h-1zM205 406h1v2h-1zM463 433h1v1h-1zM928 364h1v2h-1zM1023 383h1v1h-1zM737 425h1v1h-1zM890 375h1v1h-1zM584 430h1v1h-1zM832 423h1v2h-1zM608 405h1v1h-1zM504 433h1v1h-1zM650 407h1v1h-1zM505 434h1v1h-1zM906 369h1v1h-1zM103 413h1v1h-1zM315 430h1v1h-1zM539 431h1v1h-1zM416 436h1v1h-1zM486 433h1v1h-1zM467 429h1v1h-1z" fill="#ffc878" shape-rendering="crispEdges"/>
<path d="M123 370h2v1h-2zM137 370h2v1h-2zM147 370h2v1h-2zM161 370h3v1h-3zM201 370h2v1h-2zM205 370h2v1h-2zM273 370h6v1h-6zM281 370h22v1h-22zM305 370h2v1h-2zM310 370h3v1h-3zM347 370h2v1h-2zM359 370h2v1h-2zM364 370h2v1h-2zM369 370h4v1h-4zM376 370h2v1h-2zM381 370h2v1h-2zM390 370h6v1h-6zM466 370h4v1h-4zM495 370h2v1h-2zM513 370h2v1h-2zM522 370h3v1h-3zM531 370h2v1h-2zM537 370h7v1h-7zM551 370h2v1h-2zM567 370h2v1h-2zM571 370h2v1h-2zM576 370h19v1h-19zM607 370h2v1h-2zM629 370h2v1h-2zM636 370h3v1h-3zM675 370h3v1h-3zM698 370h2v1h-2zM702 370h3v1h-3zM765 370h2v1h-2zM102 377h21v1h-21zM126 377h4v1h-4zM133 377h4v1h-4zM140 377h7v1h-7zM150 377h11v1h-11zM167 377h3v1h-3zM173 377h28v1h-28zM207 377h2v1h-2zM211 377h19v1h-19zM233 377h9v1h-9zM245 377h20v1h-20zM314 377h32v1h-32zM349 377h10v1h-10zM396 377h15v1h-15zM414 377h51v1h-51zM471 377h23v1h-23zM497 377h15v1h-15zM515 377h7v1h-7zM525 377h6v1h-6zM533 377h4v1h-4zM595 377h12v1h-12zM610 377h19v1h-19zM632 377h4v1h-4zM639 377h36v1h-36zM678 377h20v1h-20zM709 377h55v1h-55zM767 377h309v1h-309zM203 375h2v1h-2zM228 375h2v1h-2zM555 375h2v1h-2zM560 375h2v1h-2zM567 375h2v1h-2zM700 375h2v1h-2zM265 373h2v1h-2zM555 373h2v1h-2zM560 373h2v1h-2zM567 373h2v1h-2zM1078 373h4v1h-4zM411 444h3v1h-3zM706 444h3v1h-3zM123 371h2v1h-2zM137 371h2v1h-2zM147 371h2v1h-2zM201 371h2v1h-2zM205 371h2v1h-2zM305 371h2v1h-2zM347 371h2v1h-2zM359 371h2v1h-2zM364 371h2v1h-2zM376 371h2v1h-2zM381 371h2v1h-2zM495 371h2v1h-2zM513 371h2v1h-2zM531 371h2v1h-2zM551 371h2v1h-2zM567 371h2v1h-2zM571 371h2v1h-2zM607 371h2v1h-2zM629 371h2v1h-2zM698 371h2v1h-2zM765 371h2v1h-2zM203 374h2v1h-2zM228 374h2v1h-2zM555 374h2v1h-2zM560 374h2v1h-2zM567 374h2v1h-2zM700 374h2v1h-2zM265 372h2v1h-2zM555 372h2v1h-2zM560 372h2v1h-2zM567 372h2v1h-2zM1076 372h2v1h-2zM410 400h2v1h-2zM413 400h2v1h-2zM705 400h2v1h-2zM708 400h2v1h-2zM163 387h2v1h-2zM166 387h2v1h-2zM228 376h2v1h-2zM129 394h2v1h-2zM132 394h2v1h-2zM169 394h2v1h-2zM172 394h2v1h-2zM207 394h2v1h-2zM210 394h2v1h-2zM241 394h2v1h-2zM244 394h2v1h-2zM557 396h3v1h-3zM164 422h3v1h-3zM229 389h2v1h-2zM232 389h2v1h-2zM130 426h3v1h-3zM170 426h3v1h-3zM208 426h3v1h-3zM230 426h3v1h-3zM242 426h3v1h-3zM389 372h1v4h-1zM232 390h1v36h-1zM170 395h1v31h-1zM163 371h1v16h-1zM410 378h1v22h-1zM231 427h1v17h-1zM706 401h1v43h-1zM557 397h1v70h-1zM764 372h1v4h-1zM132 395h1v31h-1zM133 378h1v16h-1zM208 376h1v1h-1zM208 395h1v31h-1zM242 395h1v31h-1zM414 378h1v22h-1zM269 370h1v2h-1zM361 372h1v4h-1zM412 445h1v23h-1zM413 401h1v43h-1zM573 372h1v4h-1zM270 372h1v4h-1zM165 423h1v18h-1zM166 388h1v34h-1zM131 427h1v17h-1zM137 372h1v2h-1zM230 390h1v36h-1zM524 371h1v3h-1zM307 372h1v4h-1zM308 376h1v2h-1zM562 376h1v2h-1zM708 401h1v43h-1zM638 371h1v3h-1zM167 378h1v9h-1zM547 370h1v2h-1zM379 376h1v2h-1zM705 374h1v26h-1zM129 378h1v16h-1zM173 378h1v16h-1zM281 371h1v1h-1zM493 376h1v1h-1zM139 372h1v4h-1zM698 372h1v2h-1zM709 378h1v22h-1zM565 372h1v4h-1zM210 395h1v31h-1zM707 445h1v22h-1zM466 371h1v1h-1zM243 427h1v17h-1zM130 395h1v31h-1zM383 372h1v4h-1zM172 395h1v31h-1zM411 401h1v43h-1zM375 372h1v4h-1zM554 376h1v2h-1zM211 378h1v16h-1zM169 378h1v16h-1zM244 395h1v31h-1zM245 378h1v16h-1zM272 372h1v4h-1zM241 378h1v16h-1zM702 371h1v3h-1zM209 427h1v17h-1zM264 374h1v3h-1zM1077 370h1v2h-1zM385 372h1v4h-1zM123 372h1v2h-1zM469 371h1v1h-1zM556 370h1v2h-1zM556 376h1v20h-1zM164 388h1v34h-1zM470 372h1v4h-1zM203 372h1v2h-1zM560 370h1v2h-1zM560 376h1v20h-1zM374 376h1v2h-1zM207 372h1v4h-1zM207 378h1v16h-1zM704 371h1v3h-1zM233 378h1v11h-1zM309 372h1v4h-1zM171 427h1v17h-1zM229 370h1v4h-1zM229 378h1v11h-1zM564 370h1v2h-1zM522 371h1v3h-1zM1081 371h1v2h-1zM636 371h1v3h-1zM278 372h1v4h-1zM533 372h1v4h-1zM358 374h1v3h-1zM570 372h1v4h-1zM563 372h1v4h-1zM521 374h1v3h-1zM388 376h1v2h-1zM514 372h1v2h-1zM1080 374h1v2h-1zM677 371h1v3h-1zM635 374h1v3h-1zM373 372h1v4h-1zM312 371h1v1h-1zM574 376h1v2h-1zM700 372h1v2h-1zM304 372h1v4h-1zM201 372h1v2h-1zM767 374h1v3h-1zM265 370h1v2h-1zM387 372h1v4h-1zM550 372h1v4h-1zM629 372h1v2h-1zM368 372h1v4h-1zM531 372h1v2h-1zM553 372h1v4h-1zM766 372h1v2h-1zM530 374h1v3h-1zM301 371h1v1h-1zM594 371h1v3h-1zM471 376h1v1h-1zM494 372h1v4h-1zM536 374h1v3h-1zM395 371h1v3h-1zM631 372h1v4h-1zM303 376h1v2h-1zM268 372h1v4h-1zM701 376h1v2h-1zM348 372h1v2h-1zM378 372h1v4h-1zM549 376h1v2h-1zM576 371h1v1h-1zM302 372h1v4h-1zM126 376h1v1h-1zM465 372h1v4h-1zM544 372h1v4h-1zM149 372h1v4h-1zM271 376h1v2h-1zM140 376h1v1h-1zM346 372h1v4h-1zM566 376h1v2h-1zM497 374h1v3h-1zM277 371h1v1h-1zM569 376h1v2h-1zM1078 374h1v3h-1zM512 372h1v4h-1zM675 371h1v3h-1zM204 376h1v2h-1zM280 372h1v4h-1zM367 376h1v2h-1zM359 372h1v2h-1zM147 372h1v2h-1zM310 371h1v1h-1zM610 376h1v1h-1zM200 374h1v3h-1zM632 376h1v1h-1zM496 372h1v2h-1zM363 372h1v4h-1zM146 374h1v3h-1zM575 372h1v4h-1zM313 372h1v4h-1zM534 376h1v1h-1zM267 376h1v2h-1zM697 374h1v3h-1zM161 371h1v3h-1zM548 372h1v4h-1zM366 372h1v4h-1zM525 374h1v3h-1zM384 376h1v2h-1zM1076 373h1v3h-1zM122 374h1v3h-1zM266 374h1v2h-1zM380 372h1v4h-1zM314 376h1v1h-1zM1082 369h1v2h-1zM390 371h1v1h-1zM136 374h1v3h-1zM349 374h1v3h-1zM546 372h1v4h-1zM515 374h1v3h-1zM674 374h1v3h-1zM279 376h1v2h-1zM609 372h1v4h-1zM464 376h1v1h-1zM628 374h1v3h-1zM396 374h1v3h-1zM543 371h1v1h-1zM125 372h1v4h-1zM345 376h1v1h-1zM372 371h1v1h-1zM595 374h1v3h-1zM606 374h1v3h-1zM386 370h1v2h-1zM678 374h1v3h-1zM545 376h1v2h-1zM537 371h1v3h-1zM362 376h1v2h-1zM639 374h1v3h-1zM160 374h1v3h-1zM1079 370h1v3h-1zM205 372h1v2h-1zM763 376h1v1h-1zM273 371h1v1h-1zM607 372h1v2h-1zM150 376h1v1h-1zM1075 376h1v1h-1zM369 371h1v1h-1zM511 376h1v1h-1z" fill="#ffff00" shape-rendering="crispEdges"/>
<path d="M483 367h206v1h-206zM359 369h124v1h-124zM690 365h163v1h-163zM938 350h40v1h-40zM154 379h39v1h-39zM112 382h42v1h-42zM854 355h40v1h-40zM980 355h42v1h-42zM1062 355h21v1h-21zM236 372h123v1h-123zM896 345h40v1h-40zM193 377h42v1h-42zM102 385h11v1h-11zM1021 353h40v1h-40zM895 347h1v4h-1zM112 383h1v2h-1zM893 354h1v1h-1zM193 378h1v1h-1zM854 356h1v2h-1zM853 358h1v5h-1zM936 346h1v2h-1zM894 351h1v3h-1zM979 353h1v2h-1zM896 346h1v1h-1zM154 380h1v1h-1zM978 351h1v2h-1zM235 374h1v2h-1zM234 376h1v1h-1zM236 373h1v1h-1zM153 381h1v1h-1zM852 363h1v2h-1zM358 371h1v1h-1zM359 370h1v1h-1zM937 348h1v2h-1zM483 368h1v1h-1zM1061 354h1v1h-1zM1021 354h1v1h-1zM689 366h1v1h-1z" fill="#ffffff" shape-rendering="crispEdges"/>
<path d="M107 313h2v1h-2zM178 313h2v1h-2zM249 313h2v1h-2zM596 313h2v1h-2zM602 313h3v1h-3zM616 313h2v1h-2zM693 313h2v1h-2zM728 313h6v1h-6zM743 313h2v1h-2zM161 303h2v1h-2zM515 303h2v1h-2zM638 303h2v1h-2zM1034 303h2v1h-2zM1040 303h2v1h-2zM178 315h2v1h-2zM249 315h2v1h-2zM303 315h2v1h-2zM621 315h2v1h-2zM720 315h2v1h-2zM745 315h2v1h-2zM808 315h2v1h-2zM825 315h2v1h-2zM852 315h2v1h-2zM1075 315h2v1h-2zM216 321h2v1h-2zM277 321h2v1h-2zM579 321h2v1h-2zM741 321h2v1h-2zM777 321h2v1h-2zM1049 321h2v1h-2zM1054 321h3v1h-3zM1073 321h2v1h-2zM141 328h2v1h-2zM224 328h2v1h-2zM233 328h2v1h-2zM390 328h2v1h-2zM553 328h2v1h-2zM599 328h2v1h-2zM641 328h2v1h-2zM676 328h2v1h-2zM755 328h2v1h-2zM815 328h2v1h-2zM829 328h2v1h-2zM110 338h2v1h-2zM335 338h2v1h-2zM388 338h2v1h-2zM577 338h2v1h-2zM658 338h2v1h-2zM663 338h3v1h-3zM735 338h2v1h-2zM369 340h2v1h-2zM388 340h2v1h-2zM535 340h2v1h-2zM682 340h2v1h-2zM735 340h2v1h-2zM923 276h2v1h-2zM930 276h2v1h-2zM1004 276h2v1h-2zM178 314h2v1h-2zM203 314h2v1h-2zM249 314h2v1h-2zM303 314h2v1h-2zM616 314h2v1h-2zM621 314h2v1h-2zM645 314h2v1h-2zM695 314h2v1h-2zM745 314h2v1h-2zM808 314h2v1h-2zM852 314h2v1h-2zM185 296h2v1h-2zM191 296h2v1h-2zM714 296h2v1h-2zM997 296h2v1h-2zM1023 296h2v1h-2zM188 317h2v1h-2zM530 317h2v1h-2zM579 317h2v1h-2zM597 317h2v1h-2zM647 317h2v1h-2zM679 317h2v1h-2zM741 317h2v1h-2zM745 317h2v1h-2zM753 317h2v1h-2zM825 317h2v1h-2zM1059 317h2v1h-2zM1075 317h2v1h-2zM264 305h2v1h-2zM515 305h2v1h-2zM650 305h2v1h-2zM764 305h2v1h-2zM795 305h2v1h-2zM1034 305h2v1h-2zM1040 305h2v1h-2zM185 295h2v1h-2zM191 295h2v1h-2zM997 295h2v1h-2zM181 323h2v1h-2zM205 323h2v1h-2zM390 323h2v1h-2zM549 323h2v1h-2zM599 323h2v1h-2zM609 323h2v1h-2zM777 323h2v1h-2zM1073 323h2v1h-2zM104 324h2v1h-2zM169 324h2v1h-2zM197 324h2v1h-2zM224 324h2v1h-2zM390 324h2v1h-2zM557 324h4v1h-4zM599 324h2v1h-2zM609 324h2v1h-2zM777 324h2v1h-2zM819 324h2v1h-2zM1073 324h2v1h-2zM143 330h2v1h-2zM231 330h2v1h-2zM250 330h2v1h-2zM392 330h3v1h-3zM555 330h2v1h-2zM599 330h2v1h-2zM619 330h2v1h-2zM626 330h2v1h-2zM641 330h2v1h-2zM676 330h2v1h-2zM755 330h2v1h-2zM817 330h2v1h-2zM833 330h3v1h-3zM857 287h2v1h-2zM883 287h2v1h-2zM887 287h2v1h-2zM945 287h2v1h-2zM954 287h2v1h-2zM1025 287h3v1h-3zM133 309h2v1h-2zM515 309h2v1h-2zM606 309h3v1h-3zM725 309h2v1h-2zM739 309h2v1h-2zM793 309h2v1h-2zM988 309h5v1h-5zM1034 309h2v1h-2zM1057 309h2v1h-2zM925 265h2v1h-2zM451 351h2v1h-2zM497 351h3v1h-3zM522 351h3v1h-3zM570 351h5v1h-5zM216 319h2v1h-2zM543 319h3v1h-3zM579 319h2v1h-2zM647 319h2v1h-2zM679 319h2v1h-2zM741 319h2v1h-2zM751 319h2v1h-2zM777 319h2v1h-2zM1049 319h2v1h-2zM1059 319h2v1h-2zM1072 319h2v1h-2zM216 318h2v1h-2zM380 318h2v1h-2zM579 318h2v1h-2zM614 318h2v1h-2zM647 318h2v1h-2zM679 318h2v1h-2zM741 318h2v1h-2zM751 318h2v1h-2zM1049 318h2v1h-2zM1059 318h2v1h-2zM1075 318h2v1h-2zM175 292h2v1h-2zM143 332h2v1h-2zM235 332h3v1h-3zM246 332h2v1h-2zM250 332h2v1h-2zM392 332h3v1h-3zM493 332h2v1h-2zM575 332h2v1h-2zM626 332h2v1h-2zM716 332h2v1h-2zM735 332h2v1h-2zM811 332h2v1h-2zM827 332h2v1h-2zM831 332h2v1h-2zM834 332h2v1h-2zM340 350h2v1h-2zM408 350h7v1h-7zM421 350h18v1h-18zM456 350h6v1h-6zM466 350h11v1h-11zM511 350h2v1h-2zM708 350h2v1h-2zM139 334h2v1h-2zM143 334h2v1h-2zM246 334h2v1h-2zM493 334h2v1h-2zM575 334h2v1h-2zM735 334h2v1h-2zM1079 334h2v1h-2zM896 278h2v1h-2zM923 278h2v1h-2zM930 278h2v1h-2zM974 278h2v1h-2zM1029 278h2v1h-2zM141 326h2v1h-2zM165 326h2v1h-2zM195 326h2v1h-2zM224 326h2v1h-2zM390 326h2v1h-2zM553 326h2v1h-2zM599 326h2v1h-2zM641 326h2v1h-2zM819 326h2v1h-2zM829 326h2v1h-2zM135 308h2v1h-2zM292 308h2v1h-2zM515 308h2v1h-2zM611 308h2v1h-2zM725 308h2v1h-2zM1034 308h2v1h-2zM1040 308h2v1h-2zM1057 308h2v1h-2zM864 280h2v1h-2zM888 280h2v1h-2zM1011 280h4v1h-4zM1029 280h2v1h-2zM314 348h2v1h-2zM395 348h2v1h-2zM442 348h2v1h-2zM564 348h5v1h-5zM947 271h2v1h-2zM515 306h2v1h-2zM611 306h2v1h-2zM1034 306h2v1h-2zM1040 306h2v1h-2zM1057 306h2v1h-2zM885 283h2v1h-2zM965 283h2v1h-2zM1000 283h3v1h-3zM1007 283h2v1h-2zM1021 283h2v1h-2zM397 347h2v1h-2zM479 347h2v1h-2zM161 302h2v1h-2zM515 302h2v1h-2zM636 302h4v1h-4zM1063 302h2v1h-2zM127 298h2v1h-2zM161 298h2v1h-2zM185 298h2v1h-2zM191 298h2v1h-2zM515 298h2v1h-2zM714 298h2v1h-2zM780 298h3v1h-3zM977 298h2v1h-2zM1023 298h2v1h-2zM107 311h2v1h-2zM254 311h2v1h-2zM287 311h3v1h-3zM515 311h2v1h-2zM616 311h2v1h-2zM693 311h2v1h-2zM739 311h2v1h-2zM743 311h2v1h-2zM875 274h6v1h-6zM923 274h2v1h-2zM178 316h3v1h-3zM303 316h2v1h-2zM530 316h2v1h-2zM621 316h2v1h-2zM679 316h2v1h-2zM745 316h2v1h-2zM753 316h2v1h-2zM825 316h2v1h-2zM1075 316h2v1h-2zM143 331h2v1h-2zM231 331h2v1h-2zM238 331h2v1h-2zM250 331h2v1h-2zM392 331h3v1h-3zM493 331h2v1h-2zM555 331h2v1h-2zM575 331h2v1h-2zM599 331h2v1h-2zM626 331h2v1h-2zM641 331h2v1h-2zM716 331h2v1h-2zM755 331h2v1h-2zM817 331h2v1h-2zM833 331h3v1h-3zM965 282h2v1h-2zM1000 282h2v1h-2zM1037 282h2v1h-2zM181 322h2v1h-2zM205 322h2v1h-2zM371 322h2v1h-2zM549 322h2v1h-2zM599 322h2v1h-2zM741 322h2v1h-2zM777 322h2v1h-2zM1049 322h2v1h-2zM1073 322h2v1h-2zM224 329h2v1h-2zM233 329h2v1h-2zM250 329h2v1h-2zM392 329h2v1h-2zM552 329h2v1h-2zM555 329h2v1h-2zM599 329h2v1h-2zM641 329h2v1h-2zM676 329h2v1h-2zM755 329h2v1h-2zM817 329h2v1h-2zM829 329h2v1h-2zM833 329h3v1h-3zM630 289h2v1h-2zM1019 289h2v1h-2zM283 344h2v1h-2zM298 344h3v1h-3zM306 344h2v1h-2zM401 344h2v1h-2zM667 344h2v1h-2zM141 327h2v1h-2zM195 327h2v1h-2zM224 327h2v1h-2zM390 327h2v1h-2zM553 327h2v1h-2zM599 327h2v1h-2zM641 327h2v1h-2zM755 327h2v1h-2zM819 327h2v1h-2zM829 327h2v1h-2zM161 304h2v1h-2zM264 304h2v1h-2zM515 304h2v1h-2zM650 304h2v1h-2zM795 304h2v1h-2zM1034 304h2v1h-2zM1040 304h2v1h-2zM515 310h2v1h-2zM739 310h2v1h-2zM791 310h2v1h-2zM1057 310h2v1h-2zM152 320h2v1h-2zM216 320h2v1h-2zM226 320h2v1h-2zM277 320h2v1h-2zM384 320h3v1h-3zM579 320h2v1h-2zM647 320h2v1h-2zM741 320h2v1h-2zM751 320h2v1h-2zM777 320h2v1h-2zM1049 320h2v1h-2zM141 325h2v1h-2zM167 325h2v1h-2zM224 325h2v1h-2zM375 325h2v1h-2zM390 325h2v1h-2zM599 325h2v1h-2zM819 325h2v1h-2zM367 341h2v1h-2zM501 341h2v1h-2zM535 341h2v1h-2zM388 339h2v1h-2zM577 339h2v1h-2zM682 339h6v1h-6zM735 339h2v1h-2zM327 349h6v1h-6zM342 349h3v1h-3zM361 349h2v1h-2zM504 349h2v1h-2zM710 349h2v1h-2zM454 345h2v1h-2zM587 345h8v1h-8zM120 337h2v1h-2zM259 337h2v1h-2zM463 337h2v1h-2zM577 337h2v1h-2zM735 337h2v1h-2zM909 272h2v1h-2zM957 272h3v1h-3zM967 272h2v1h-2zM161 301h2v1h-2zM515 301h2v1h-2zM634 301h2v1h-2zM638 301h2v1h-2zM767 301h2v1h-2zM1063 301h2v1h-2zM185 297h2v1h-2zM191 297h2v1h-2zM714 297h2v1h-2zM977 297h2v1h-2zM1023 297h2v1h-2zM161 300h2v1h-2zM515 300h2v1h-2zM864 279h2v1h-2zM914 279h3v1h-3zM951 279h2v1h-2zM974 279h2v1h-2zM1029 279h2v1h-2zM246 336h2v1h-2zM259 336h2v1h-2zM463 336h2v1h-2zM577 336h2v1h-2zM735 336h2v1h-2zM885 285h2v1h-2zM893 285h2v1h-2zM933 285h2v1h-2zM630 288h2v1h-2zM842 288h2v1h-2zM268 342h2v1h-2zM271 342h2v1h-2zM535 342h2v1h-2zM672 342h2v1h-2zM127 299h2v1h-2zM161 299h2v1h-2zM191 299h2v1h-2zM220 299h2v1h-2zM515 299h2v1h-2zM977 299h2v1h-2zM1023 299h2v1h-2zM175 294h2v1h-2zM771 294h2v1h-2zM971 294h2v1h-2zM997 294h2v1h-2zM1043 294h2v1h-2zM139 335h2v1h-2zM246 335h2v1h-2zM575 335h2v1h-2zM735 335h2v1h-2zM1079 335h2v1h-2zM888 281h2v1h-2zM995 281h2v1h-2zM1029 281h2v1h-2zM1037 281h2v1h-2zM885 284h2v1h-2zM965 284h2v1h-2zM1007 284h2v1h-2zM1021 284h2v1h-2zM310 346h2v1h-2zM440 346h2v1h-2zM483 346h2v1h-2zM630 290h2v1h-2zM760 290h2v1h-2zM860 290h2v1h-2zM107 312h2v1h-2zM178 312h2v1h-2zM249 312h2v1h-2zM616 312h2v1h-2zM693 312h2v1h-2zM732 312h2v1h-2zM743 312h2v1h-2zM630 291h2v1h-2zM760 291h2v1h-2zM869 291h2v1h-2zM1032 291h2v1h-2zM115 333h3v1h-3zM143 333h2v1h-2zM246 333h2v1h-2zM250 333h2v1h-2zM392 333h3v1h-3zM493 333h2v1h-2zM575 333h2v1h-2zM626 333h2v1h-2zM735 333h2v1h-2zM799 333h7v1h-7zM827 333h2v1h-2zM831 333h2v1h-2zM889 277h2v1h-2zM896 277h2v1h-2zM923 277h2v1h-2zM930 277h2v1h-2zM974 277h2v1h-2zM515 307h2v1h-2zM611 307h2v1h-2zM1034 307h2v1h-2zM1040 307h2v1h-2zM1057 307h2v1h-2zM840 286h2v1h-2zM844 286h3v1h-3zM883 286h2v1h-2zM887 286h2v1h-2zM893 286h2v1h-2zM933 286h2v1h-2zM945 286h2v1h-2zM954 286h2v1h-2zM296 343h2v1h-2zM354 343h2v1h-2zM535 343h2v1h-2zM672 343h2v1h-2zM175 293h2v1h-2zM971 293h2v1h-2zM1043 293h2v1h-2zM923 275h2v1h-2zM902 273h2v1h-2zM906 263h2v1h-2zM961 263h2v1h-2zM911 266h2v1h-2zM941 262h2v1h-2zM920 258h2v1h-2zM920 259h2v1h-2zM797 308h1v19h-1zM998 297h1v11h-1zM184 304h1v12h-1zM371 321h1v1h-1zM371 323h1v8h-1zM969 273h1v10h-1zM518 335h1v11h-1zM530 314h1v2h-1zM162 292h1v6h-1zM750 311h1v7h-1zM173 303h1v7h-1zM770 295h1v4h-1zM306 335h1v9h-1zM279 322h1v8h-1zM716 317h1v14h-1zM716 333h1v1h-1zM245 327h1v5h-1zM1022 285h1v8h-1zM908 264h1v8h-1zM1054 318h1v3h-1zM1033 292h1v6h-1zM146 324h1v2h-1zM743 314h1v3h-1zM629 292h1v16h-1zM1025 288h1v8h-1zM521 350h1v1h-1zM594 328h1v17h-1zM956 276h1v10h-1zM712 321h1v28h-1zM740 307h1v2h-1zM740 312h1v4h-1zM618 316h1v14h-1zM873 278h1v5h-1zM610 310h1v13h-1zM839 287h1v2h-1zM912 267h1v5h-1zM986 306h1v1h-1zM105 325h1v7h-1zM514 312h1v36h-1zM976 280h1v14h-1zM714 290h1v6h-1zM336 339h1v2h-1zM537 324h1v8h-1zM652 312h1v9h-1zM766 302h1v1h-1zM758 294h1v12h-1zM267 322h1v18h-1zM949 272h1v6h-1zM833 327h1v2h-1zM215 312h1v6h-1zM370 331h1v9h-1zM256 314h1v4h-1zM276 327h1v6h-1zM994 282h1v6h-1zM971 295h1v4h-1zM1039 283h1v17h-1zM305 317h1v18h-1zM124 315h1v8h-1zM332 347h1v2h-1zM365 343h1v2h-1zM734 315h1v17h-1zM713 299h1v22h-1zM108 309h1v2h-1zM108 314h1v10h-1zM819 321h1v3h-1zM724 310h1v4h-1zM852 316h1v5h-1zM757 306h1v21h-1zM294 312h1v14h-1zM777 325h1v7h-1zM609 325h1v12h-1zM534 328h1v12h-1zM252 316h1v13h-1zM640 307h1v18h-1zM895 279h1v6h-1zM821 329h1v5h-1zM358 341h1v3h-1zM1081 327h1v5h-1zM919 264h1v6h-1zM287 312h1v7h-1zM453 346h1v5h-1zM445 344h1v2h-1zM719 316h1v8h-1zM392 334h1v10h-1zM248 316h1v13h-1zM563 332h1v12h-1zM395 343h1v5h-1zM395 349h1v1h-1zM174 295h1v8h-1zM301 336h1v6h-1zM964 272h1v10h-1zM177 296h1v14h-1zM259 338h1v4h-1zM1036 286h1v17h-1zM1068 327h1v7h-1zM678 322h1v6h-1zM651 306h1v6h-1zM241 316h1v7h-1zM1079 336h1v3h-1zM785 305h1v2h-1zM1058 311h1v6h-1zM188 306h1v11h-1zM127 297h1v1h-1zM127 300h1v2h-1zM199 325h1v2h-1zM240 323h1v6h-1zM219 300h1v6h-1zM628 308h1v19h-1zM807 320h1v6h-1zM754 314h1v2h-1zM754 318h1v2h-1zM1009 277h1v6h-1zM1020 285h1v4h-1zM1020 290h1v1h-1zM389 341h1v5h-1zM286 319h1v15h-1zM613 309h1v9h-1zM142 321h1v4h-1zM214 302h1v10h-1zM529 318h1v7h-1zM762 292h1v7h-1zM627 327h1v3h-1zM627 334h1v3h-1zM281 334h1v3h-1zM838 289h1v7h-1zM207 306h1v8h-1zM776 306h1v13h-1zM293 307h1v1h-1zM293 309h1v3h-1zM608 310h1v13h-1zM513 348h1v2h-1zM218 306h1v11h-1zM533 322h1v6h-1zM693 314h1v4h-1zM137 312h1v18h-1zM765 303h1v2h-1zM692 318h1v6h-1zM160 309h1v9h-1zM715 299h1v18h-1zM829 324h1v2h-1zM829 330h1v2h-1zM224 322h1v2h-1zM224 330h1v4h-1zM578 322h1v14h-1zM495 335h1v10h-1zM536 332h1v8h-1zM1065 303h1v9h-1zM832 334h1v3h-1zM187 299h1v7h-1zM993 288h1v10h-1zM206 314h1v8h-1zM944 272h1v14h-1zM364 345h1v2h-1zM707 336h1v10h-1zM922 260h1v10h-1zM456 349h1v1h-1zM657 339h1v1h-1zM448 345h1v1h-1zM837 296h1v14h-1zM828 334h1v5h-1zM243 316h1v6h-1zM681 320h1v14h-1zM1028 282h1v4h-1zM577 340h1v9h-1zM1053 312h1v6h-1zM810 316h1v12h-1zM515 290h1v8h-1zM244 322h1v5h-1zM350 340h1v1h-1zM1042 296h1v7h-1zM600 317h1v5h-1zM600 332h1v5h-1zM1034 298h1v5h-1zM316 347h1v1h-1zM194 309h1v13h-1zM718 324h1v7h-1zM960 267h1v4h-1zM623 317h1v4h-1zM992 298h1v11h-1zM548 324h1v1h-1zM910 267h1v5h-1zM761 288h1v2h-1zM639 297h1v4h-1zM639 304h1v3h-1zM773 298h1v4h-1zM195 322h1v4h-1zM195 328h1v1h-1zM805 331h1v2h-1zM836 310h1v16h-1zM251 334h1v6h-1zM1016 284h1v2h-1zM263 308h1v10h-1zM798 327h1v4h-1zM126 302h1v7h-1zM620 319h1v11h-1zM338 343h1v3h-1zM849 293h1v4h-1zM632 293h1v5h-1zM738 312h1v8h-1zM940 265h1v4h-1zM335 336h1v2h-1zM745 318h1v4h-1zM466 346h1v4h-1zM285 334h1v10h-1zM581 327h1v12h-1zM646 315h1v2h-1zM1075 312h1v3h-1zM1075 319h1v2h-1zM921 254h1v4h-1zM764 306h1v2h-1zM824 318h1v10h-1zM741 316h1v1h-1zM741 323h1v3h-1zM1057 300h1v6h-1zM680 312h1v4h-1zM262 318h1v8h-1zM597 314h1v3h-1zM871 287h1v3h-1zM997 285h1v9h-1zM955 288h1v3h-1zM190 301h1v16h-1zM669 338h1v4h-1zM1031 283h1v8h-1zM820 328h1v1h-1zM202 315h1v3h-1zM497 349h1v2h-1zM517 315h1v20h-1zM737 320h1v11h-1zM643 321h1v5h-1zM963 264h1v8h-1zM749 304h1v7h-1zM258 325h1v11h-1zM929 270h1v6h-1zM250 309h1v3h-1zM250 316h1v13h-1zM1056 311h1v10h-1zM394 334h1v9h-1zM786 307h1v1h-1zM295 326h1v13h-1zM106 314h1v10h-1zM1067 319h1v8h-1zM932 279h1v6h-1zM650 300h1v4h-1zM641 325h1v1h-1zM641 332h1v3h-1zM1070 327h1v7h-1zM882 278h1v6h-1zM787 308h1v1h-1zM109 324h1v11h-1zM779 302h1v11h-1zM706 318h1v18h-1zM980 292h1v3h-1zM959 271h1v1h-1zM906 264h1v3h-1zM266 306h1v16h-1zM675 331h1v6h-1zM277 322h1v5h-1zM113 335h1v2h-1zM569 349h1v2h-1zM615 315h1v3h-1zM125 309h1v6h-1zM280 330h1v4h-1zM970 283h1v10h-1zM943 263h1v9h-1zM228 321h1v2h-1zM825 310h1v5h-1zM334 339h1v4h-1zM649 306h1v11h-1zM178 310h1v2h-1zM178 317h1v5h-1zM947 272h1v8h-1zM733 310h1v2h-1zM733 314h1v1h-1zM671 338h1v4h-1zM462 342h1v6h-1zM999 284h1v10h-1zM851 303h1v11h-1zM756 332h1v6h-1zM420 348h1v2h-1zM653 321h1v9h-1zM1063 303h1v4h-1zM171 316h1v6h-1zM391 315h1v8h-1zM867 284h1v4h-1zM920 260h1v4h-1zM668 342h1v2h-1zM1078 326h1v8h-1zM492 340h1v6h-1zM721 316h1v2h-1zM691 324h1v7h-1zM450 348h1v2h-1zM201 318h1v4h-1zM159 318h1v4h-1zM387 324h1v8h-1zM390 329h1v9h-1zM546 320h1v2h-1zM1052 309h1v3h-1zM1071 320h1v7h-1zM102 315h1v2h-1zM1015 282h1v2h-1zM564 344h1v4h-1zM564 349h1v1h-1zM209 296h1v4h-1zM1018 287h1v2h-1zM755 320h1v7h-1zM189 318h1v7h-1zM304 307h1v7h-1zM147 321h1v3h-1zM1040 300h1v3h-1zM1040 309h1v4h-1zM905 267h1v4h-1zM682 334h1v5h-1zM682 341h1v1h-1zM854 297h1v11h-1zM223 308h1v14h-1zM291 309h1v1h-1zM465 338h1v8h-1zM645 312h1v2h-1zM763 299h1v6h-1zM303 317h1v10h-1zM901 274h1v3h-1zM827 324h1v8h-1zM1030 275h1v3h-1zM1030 282h1v1h-1zM996 282h1v3h-1zM946 280h1v6h-1zM454 343h1v2h-1zM204 315h1v7h-1zM899 283h1v3h-1zM496 345h1v4h-1zM193 300h1v9h-1zM923 270h1v4h-1zM823 328h1v6h-1zM527 333h1v4h-1zM123 323h1v7h-1zM962 260h1v3h-1zM363 347h1v1h-1zM260 332h1v4h-1zM1066 312h1v7h-1zM158 322h1v2h-1zM595 314h1v14h-1zM313 346h1v2h-1zM222 303h1v5h-1zM1048 300h1v13h-1zM934 284h1v1h-1zM690 331h1v4h-1zM347 344h1v1h-1zM621 312h1v2h-1zM621 317h1v2h-1zM150 323h1v2h-1zM697 313h1v1h-1zM119 335h1v2h-1zM942 260h1v2h-1zM229 323h1v2h-1zM208 300h1v6h-1zM1006 280h1v3h-1zM774 302h1v2h-1zM230 325h1v3h-1zM576 324h1v7h-1zM850 297h1v6h-1zM965 285h1v4h-1zM393 323h1v6h-1zM853 308h1v6h-1zM582 339h1v7h-1zM185 293h1v2h-1zM185 299h1v5h-1zM257 318h1v7h-1zM575 336h1v9h-1zM1061 312h1v4h-1zM818 328h1v1h-1zM818 332h1v2h-1zM747 304h1v7h-1zM861 289h1v1h-1zM1021 278h1v5h-1zM961 264h1v3h-1zM911 263h1v3h-1zM822 334h1v3h-1zM814 329h1v2h-1zM689 335h1v2h-1zM617 309h1v2h-1zM617 315h1v1h-1zM769 299h1v2h-1zM883 284h1v2h-1zM883 288h1v2h-1zM346 345h1v2h-1zM1049 313h1v5h-1zM1049 323h1v3h-1zM217 317h1v1h-1zM217 322h1v4h-1zM842 289h1v1h-1zM226 321h1v3h-1zM1035 310h1v7h-1zM1024 300h1v4h-1zM191 292h1v3h-1zM191 300h1v1h-1zM672 344h1v1h-1zM282 337h1v4h-1zM138 330h1v4h-1zM654 330h1v5h-1zM1043 292h1v1h-1zM1043 295h1v1h-1zM1046 296h1v2h-1zM975 273h1v4h-1zM270 341h1v1h-1zM388 332h1v6h-1zM130 302h1v2h-1zM377 323h1v2h-1zM967 273h1v6h-1zM482 345h1v1h-1zM452 352h1v2h-1zM264 302h1v2h-1zM264 306h1v2h-1zM579 313h1v4h-1zM308 345h1v2h-1zM532 318h1v4h-1zM624 321h1v4h-1zM239 329h1v2h-1zM1005 277h1v3h-1zM345 347h1v2h-1zM494 326h1v5h-1zM977 294h1v3h-1zM977 300h1v2h-1zM528 325h1v8h-1zM141 329h1v2h-1zM164 312h1v9h-1zM660 337h1v1h-1zM326 347h1v2h-1zM936 277h1v3h-1zM736 331h1v1h-1zM273 340h1v2h-1zM925 264h1v1h-1zM925 266h1v8h-1zM856 289h1v1h-1zM376 326h1v1h-1zM353 341h1v2h-1zM974 280h1v3h-1zM631 292h1v1h-1zM924 279h1v5h-1zM580 322h1v5h-1zM917 276h1v3h-1zM1023 293h1v3h-1zM835 326h1v3h-1zM835 333h1v2h-1zM143 329h1v1h-1zM143 335h1v3h-1zM1038 278h1v3h-1zM501 338h1v3h-1zM493 335h1v5h-1zM831 330h1v2h-1zM863 281h1v5h-1zM175 290h1v2h-1zM140 331h1v3h-1zM561 325h1v1h-1zM499 348h1v3h-1zM220 297h1v2h-1zM562 326h1v6h-1zM321 349h1v1h-1zM893 282h1v3h-1zM200 322h1v3h-1zM816 327h1v1h-1zM789 310h1v1h-1zM129 300h1v2h-1zM443 347h1v1h-1zM356 341h1v2h-1zM855 290h1v7h-1zM847 287h1v2h-1zM612 303h1v3h-1zM973 283h1v6h-1zM983 296h1v4h-1zM234 330h1v2h-1zM163 305h1v7h-1zM337 341h1v2h-1zM778 313h1v6h-1zM728 312h1v1h-1zM386 319h1v1h-1zM386 321h1v3h-1zM324 344h1v1h-1zM461 348h1v2h-1zM325 345h1v2h-1zM404 344h1v2h-1zM351 339h1v1h-1zM362 348h1v1h-1zM708 346h1v4h-1zM708 351h1v1h-1zM889 276h1v1h-1zM889 278h1v2h-1zM268 340h1v2h-1zM268 343h1v1h-1zM442 349h1v1h-1zM1051 312h1v6h-1zM735 341h1v5h-1zM538 321h1v3h-1zM625 325h1v5h-1zM972 289h1v4h-1zM1003 277h1v6h-1zM275 333h1v5h-1zM665 337h1v1h-1zM665 339h1v1h-1zM644 315h1v6h-1zM1077 319h1v7h-1zM666 340h1v4h-1zM415 349h1v1h-1zM796 306h1v2h-1zM968 268h1v4h-1zM302 327h1v9h-1zM153 321h1v1h-1zM104 321h1v3h-1zM701 311h1v1h-1zM552 330h1v2h-1zM933 287h1v2h-1zM114 334h1v1h-1zM1069 334h1v4h-1zM172 310h1v6h-1zM233 326h1v2h-1zM510 348h1v1h-1zM502 342h1v4h-1zM1072 316h1v3h-1zM1027 286h1v1h-1zM314 349h1v1h-1zM440 345h1v1h-1zM555 332h1v3h-1zM574 345h1v6h-1zM183 316h1v4h-1zM300 342h1v2h-1zM247 329h1v3h-1zM247 337h1v3h-1zM887 288h1v4h-1zM605 310h1v2h-1zM1008 285h1v2h-1zM255 312h1v2h-1zM272 343h1v1h-1zM868 288h1v3h-1zM535 344h1v6h-1zM451 350h1v1h-1zM205 324h1v5h-1zM783 300h1v2h-1zM360 346h1v3h-1zM444 346h1v1h-1zM197 325h1v1h-1zM103 317h1v4h-1zM703 313h1v1h-1zM913 272h1v6h-1zM909 273h1v4h-1zM1064 297h1v4h-1zM604 312h1v1h-1zM333 343h1v4h-1zM511 349h1v1h-1zM383 321h1v1h-1zM455 346h1v3h-1zM667 345h1v2h-1zM794 306h1v3h-1zM355 344h1v1h-1zM554 324h1v2h-1zM935 280h1v4h-1zM213 296h1v6h-1zM132 306h1v2h-1zM751 321h1v1h-1zM254 309h1v2h-1zM674 337h1v5h-1zM603 314h1v1h-1zM181 324h1v2h-1zM939 269h1v3h-1zM950 278h1v1h-1zM900 277h1v6h-1zM648 321h1v2h-1zM242 312h1v4h-1zM261 326h1v6h-1zM870 290h1v1h-1zM862 286h1v3h-1zM526 337h1v1h-1zM487 345h1v1h-1zM542 316h1v3h-1zM374 324h1v1h-1zM488 346h1v2h-1zM881 276h1v2h-1zM1074 325h1v4h-1zM630 285h1v3h-1zM1017 286h1v1h-1zM705 316h1v2h-1zM957 271h1v1h-1zM957 273h1v3h-1zM759 292h1v2h-1zM979 295h1v2h-1zM614 319h1v2h-1zM826 318h1v6h-1zM112 337h1v1h-1zM720 313h1v2h-1zM1047 298h1v2h-1zM556 327h1v2h-1zM525 338h1v7h-1zM491 346h1v4h-1zM1080 332h1v2h-1zM918 270h1v6h-1zM1010 273h1v4h-1zM907 260h1v3h-1zM131 304h1v2h-1zM478 348h1v1h-1zM309 347h1v1h-1zM180 317h1v5h-1zM602 312h1v1h-1zM799 331h1v2h-1zM509 349h1v1h-1zM290 310h1v1h-1zM723 314h1v4h-1zM661 338h1v1h-1zM210 294h1v2h-1zM122 330h1v6h-1zM296 339h1v4h-1zM524 345h1v6h-1zM520 348h1v2h-1zM985 304h1v2h-1zM897 276h1v1h-1zM619 331h1v7h-1zM1045 295h1v1h-1zM1060 316h1v1h-1zM790 311h1v1h-1zM848 289h1v4h-1zM840 285h1v1h-1zM813 331h1v1h-1zM775 304h1v2h-1zM966 279h1v3h-1zM182 320h1v2h-1zM463 338h1v4h-1zM596 309h1v4h-1zM500 342h1v6h-1zM954 283h1v3h-1zM170 322h1v2h-1zM748 300h1v4h-1zM1082 324h1v3h-1zM656 337h1v2h-1zM447 344h1v1h-1zM679 320h1v2h-1zM1011 277h1v3h-1zM698 312h1v1h-1zM904 271h1v2h-1zM984 300h1v4h-1zM866 281h1v3h-1zM808 316h1v4h-1zM557 325h1v2h-1zM888 282h1v4h-1zM154 322h1v2h-1zM633 298h1v3h-1zM953 280h1v3h-1zM670 336h1v2h-1zM203 313h1v1h-1zM1062 307h1v5h-1zM403 343h1v1h-1zM655 335h1v2h-1zM407 348h1v2h-1zM441 347h1v1h-1zM982 292h1v4h-1zM145 326h1v4h-1zM864 278h1v1h-1zM161 305h1v4h-1zM323 345h1v2h-1zM551 324h1v5h-1zM780 297h1v1h-1zM780 299h1v3h-1zM152 319h1v1h-1zM784 302h1v3h-1zM373 323h1v1h-1zM806 326h1v5h-1zM948 266h1v5h-1zM110 335h1v3h-1zM512 351h1v1h-1zM380 317h1v1h-1zM898 279h1v4h-1zM405 346h1v1h-1zM322 347h1v2h-1zM722 318h1v2h-1zM221 300h1v3h-1zM547 322h1v2h-1zM539 318h1v3h-1zM485 347h1v1h-1zM151 321h1v2h-1zM844 285h1v1h-1zM981 290h1v2h-1zM886 281h1v2h-1zM349 341h1v2h-1zM1004 273h1v3h-1zM699 311h1v1h-1zM1000 280h1v2h-1zM1037 283h1v3h-1zM379 319h1v2h-1zM318 345h1v1h-1zM782 299h1v1h-1zM489 348h1v2h-1zM702 312h1v1h-1zM439 347h1v2h-1zM136 309h1v3h-1zM744 307h1v4h-1zM1059 320h1v3h-1zM843 287h1v1h-1zM694 307h1v4h-1zM611 309h1v1h-1zM253 312h1v4h-1zM283 341h1v3h-1zM938 272h1v3h-1zM382 319h1v2h-1zM165 321h1v5h-1zM378 321h1v2h-1zM211 293h1v1h-1zM945 288h1v5h-1zM400 345h1v1h-1zM212 294h1v2h-1zM811 328h1v4h-1zM811 333h1v1h-1zM438 349h1v1h-1zM914 278h1v1h-1zM914 280h1v1h-1zM339 346h1v3h-1zM274 338h1v2h-1zM366 342h1v1h-1zM598 318h1v4h-1zM1073 320h1v1h-1zM319 346h1v1h-1zM320 347h1v2h-1zM541 314h1v2h-1zM880 275h1v1h-1zM157 324h1v2h-1zM149 321h1v2h-1zM746 311h1v3h-1zM464 333h1v3h-1zM704 314h1v2h-1zM872 283h1v4h-1zM232 332h1v2h-1zM601 314h1v3h-1zM727 310h1v2h-1zM584 347h1v1h-1zM585 348h1v1h-1zM357 339h1v2h-1zM772 295h1v3h-1zM133 308h1v1h-1zM676 327h1v1h-1zM540 316h1v2h-1zM486 346h1v1h-1zM278 316h1v4h-1zM688 337h1v2h-1zM340 349h1v1h-1zM809 310h1v4h-1zM284 345h1v2h-1zM139 336h1v1h-1zM928 267h1v3h-1zM550 321h1v1h-1zM859 288h1v2h-1zM894 287h1v3h-1zM348 343h1v1h-1zM519 346h1v2h-1zM477 349h1v1h-1zM987 307h1v2h-1zM725 307h1v1h-1zM516 312h1v3h-1zM231 328h1v2h-1zM416 347h1v2h-1zM508 350h1v1h-1zM317 346h1v1h-1zM771 292h1v2h-1zM155 324h1v2h-1zM874 275h1v3h-1zM995 278h1v3h-1zM419 346h1v2h-1zM503 346h1v3h-1zM662 339h1v1h-1zM449 346h1v2h-1zM892 279h1v3h-1zM858 286h1v1h-1zM1002 284h1v2h-1zM937 275h1v2h-1zM586 346h1v2h-1zM857 288h1v1h-1zM361 350h1v1h-1zM198 323h1v1h-1zM312 345h1v1h-1zM156 326h1v1h-1zM490 350h1v2h-1zM700 310h1v1h-1zM941 263h1v2h-1zM418 345h1v1h-1zM176 295h1v1h-1zM795 302h1v2h-1zM406 347h1v1h-1zM121 336h1v1h-1zM121 338h1v1h-1zM543 320h1v1h-1zM148 319h1v2h-1zM506 350h1v1h-1zM507 351h1v1h-1zM583 346h1v1h-1zM359 344h1v2h-1zM1014 281h1v1h-1zM788 309h1v1h-1zM118 334h1v1h-1zM841 287h1v1h-1zM235 333h1v1h-1zM417 346h1v1h-1zM860 291h1v1h-1zM891 278h1v1h-1zM399 346h1v1h-1zM352 340h1v1h-1zM481 346h1v1h-1zM927 266h1v1h-1zM446 343h1v1h-1z" fill="#00ffff" shape-rendering="crispEdges"/>
<rect x="24" y="509" width="1108" height="302" fill="#000" />
<rect x="24" y="508" width="1109" height="1" fill="#fff" />
<rect x="1132" y="509" width="1" height="303" fill="#fff" />
<rect x="24" y="811" width="1109" height="1" fill="#fff" />
<path d="M74,541.5H1082 M74,565.5H1082 M74,589.5H1082 M74,613.5H1082 M74,637.5H1082 M74,661.5H1082 M74,685.5H1082 M74,709.5H1082 M74,733.5H1082 M74,757.5H1082 M74,781.5H1082 M74.5,539V782 M84.5,539V782 M94.5,539V782 M104.5,539V782 M114.5,539V782 M124.5,539V782 M134.5,539V782 M144.5,539V782 M154.5,539V782 M164.5,539V782 M174.5,539V782 M184.5,539V782 M194.5,539V782 M204.5,539V782 M214.5,539V782 M224.5,539V782 M234.5,539V782 M244.5,539V782 M254.5,539V782 M264.5,539V782 M274.5,539V782 M284.5,539V782 M294.5,539V782 M304.5,539V782 M314.5,539V782 M324.5,539V782 M334.5,539V782 M344.5,539V782 M354.5,539V782 M364.5,539V782 M374.5,539V782 M384.5,539V782 M394.5,539V782 M404.5,539V782 M414.5,539V782 M424.5,539V782 M434.5,539V782 M444.5,539V782 M454.5,539V782 M464.5,539V782 M474.5,539V782 M484.5,539V782 M494.5,539V782 M504.5,539V782 M514.5,539V782 M524.5,539V782 M534.5,539V782 M544.5,539V782 M554.5,539V782 M564.5,539V782 M574.5,539V782 M584.5,539V782 M594.5,539V782 M604.5,539V782 M614.5,539V782 M624.5,539V782 M634.5,539V782 M644.5,539V782 M654.5,539V782 M664.5,539V782 M674.5,539V782 M684.5,539V782 M694.5,539V782 M704.5,539V782 M714.5,539V782 M724.5,539V782 M734.5,539V782 M744.5,539V782 M754.5,539V782 M764.5,539V782 M774.5,539V782 M784.5,539V782 M794.5,539V782 M804.5,539V782 M814.5,539V782 M824.5,539V782 M834.5,539V782 M844.5,539V782 M854.5,539V782 M864.5,539V782 M874.5,539V782 M884.5,539V782 M894.5,539V782 M904.5,539V782 M914.5,539V782 M924.5,539V782 M934.5,539V782 M944.5,539V782 M954.5,539V782 M964.5,539V782 M974.5,539V782 M984.5,539V782 M994.5,539V782 M1004.5,539V782 M1014.5,539V782 M1024.5,539V782 M1034.5,539V782 M1044.5,539V782 M1054.5,539V782 M1064.5,539V782 M1074.5,539V782" stroke="#008000" stroke-width="1" shape-rendering="crispEdges"/>
<rect x="74" y="781" width="2" height="1" fill="#008000" />
<rect x="76" y="781" width="1006" height="1" fill="#ff0000" />
<text x="416.7" y="528.7" font-size="10.5" fill="#ffff00" textLength="55" lengthAdjust="spacingAndGlyphs" >CPU Usage</text>
<rect x="479" y="521" width="1" height="9" fill="#ffffff" />
<text x="487.8" y="528.7" font-size="10.5" fill="#ff0000" textLength="250.5" lengthAdjust="spacingAndGlyphs" font-weight="bold" >CPU Throttling (max: 2%) - Overheating Detected!</text>
<text x="70" y="544" font-size="11" fill="#fff" textLength="28" lengthAdjust="spacingAndGlyphs" text-anchor="end" >100%</text>
<text x="70" y="786" font-size="11" fill="#fff" textLength="15" lengthAdjust="spacingAndGlyphs" text-anchor="end" >0%</text>
<text x="1085.4" y="743" font-size="11" fill="#ffff00" textLength="21" lengthAdjust="spacingAndGlyphs" >18%</text>
<text x="1085.4" y="786" font-size="11" fill="#ff0000" textLength="14.6" lengthAdjust="spacingAndGlyphs" >0%</text>
<path d="M994 678h2v1h-2zM1025 678h2v1h-2zM275 762h2v1h-2zM283 762h2v1h-2zM305 762h2v1h-2zM379 762h2v1h-2zM389 762h2v1h-2zM397 762h2v1h-2zM448 762h2v1h-2zM478 762h3v1h-3zM484 762h3v1h-3zM495 762h2v1h-2zM512 762h3v1h-3zM525 762h3v1h-3zM540 762h2v1h-2zM559 762h2v1h-2zM564 762h2v1h-2zM570 762h2v1h-2zM579 762h2v1h-2zM590 762h2v1h-2zM780 736h2v1h-2zM1078 736h2v1h-2zM979 698h2v1h-2zM1023 698h2v1h-2zM267 761h2v1h-2zM273 761h2v1h-2zM377 761h2v1h-2zM389 761h2v1h-2zM472 761h6v1h-6zM481 761h3v1h-3zM487 761h8v1h-8zM497 761h5v1h-5zM515 761h5v1h-5zM523 761h2v1h-2zM542 761h2v1h-2zM549 761h7v1h-7zM561 761h3v1h-3zM572 761h7v1h-7zM592 761h2v1h-2zM223 738h2v1h-2zM233 738h2v1h-2zM643 738h5v1h-5zM660 738h2v1h-2zM735 738h2v1h-2zM752 738h3v1h-3zM807 738h2v1h-2zM820 738h6v1h-6zM107 739h2v1h-2zM235 739h3v1h-3zM242 739h4v1h-4zM634 739h3v1h-3zM638 739h2v1h-2zM641 739h2v1h-2zM748 739h4v1h-4zM789 739h3v1h-3zM805 739h2v1h-2zM809 739h2v1h-2zM1066 739h2v1h-2zM88 735h2v1h-2zM756 735h2v1h-2zM1078 735h2v1h-2zM947 645h2v1h-2zM989 715h2v1h-2zM145 724h2v1h-2zM777 724h2v1h-2zM189 740h6v1h-6zM214 740h4v1h-4zM238 740h4v1h-4zM246 740h2v1h-2zM684 740h2v1h-2zM746 740h2v1h-2zM787 740h2v1h-2zM792 740h2v1h-2zM803 740h2v1h-2zM811 740h2v1h-2zM833 740h2v1h-2zM1068 740h3v1h-3zM269 759h2v1h-2zM302 759h2v1h-2zM317 759h2v1h-2zM391 759h2v1h-2zM429 759h3v1h-3zM435 759h2v1h-2zM445 759h2v1h-2zM451 759h2v1h-2zM468 759h2v1h-2zM503 759h2v1h-2zM521 759h2v1h-2zM567 759h2v1h-2zM92 743h2v1h-2zM150 743h2v1h-2zM252 743h2v1h-2zM669 743h2v1h-2zM677 743h2v1h-2zM702 743h7v1h-7zM1058 743h2v1h-2zM103 745h2v1h-2zM134 745h3v1h-3zM672 745h3v1h-3zM698 745h2v1h-2zM989 716h2v1h-2zM1041 716h2v1h-2zM267 760h2v1h-2zM278 760h2v1h-2zM285 760h8v1h-8zM312 760h3v1h-3zM344 760h6v1h-6zM354 760h5v1h-5zM368 760h2v1h-2zM381 760h8v1h-8zM400 760h13v1h-13zM416 760h13v1h-13zM432 760h3v1h-3zM441 760h4v1h-4zM82 742h2v1h-2zM85 742h2v1h-2zM130 742h2v1h-2zM250 742h2v1h-2zM254 742h9v1h-9zM688 742h2v1h-2zM693 742h2v1h-2zM709 742h2v1h-2zM712 742h2v1h-2zM726 742h2v1h-2zM833 742h2v1h-2zM910 639h2v1h-2zM775 732h2v1h-2zM958 635h4v1h-4zM947 644h2v1h-2zM122 744h8v1h-8zM137 744h3v1h-3zM667 744h2v1h-2zM670 744h2v1h-2zM675 744h2v1h-2zM679 744h2v1h-2zM700 744h2v1h-2zM1058 744h2v1h-2zM1025 682h2v1h-2zM221 737h2v1h-2zM737 737h2v1h-2zM780 737h2v1h-2zM815 737h5v1h-5zM775 733h2v1h-2zM829 733h2v1h-2zM842 654h3v1h-3zM944 654h2v1h-2zM932 631h2v1h-2zM145 727h2v1h-2zM200 727h2v1h-2zM219 727h2v1h-2zM611 727h2v1h-2zM630 727h2v1h-2zM722 727h2v1h-2zM719 734h2v1h-2zM775 734h2v1h-2zM782 734h2v1h-2zM849 651h2v1h-2zM952 651h2v1h-2zM1025 680h2v1h-2zM145 723h2v1h-2zM210 723h2v1h-2zM716 723h2v1h-2zM777 723h2v1h-2zM1046 723h3v1h-3zM184 722h2v1h-2zM208 722h2v1h-2zM1036 722h2v1h-2zM1049 722h2v1h-2zM845 656h2v1h-2zM623 720h2v1h-2zM772 720h2v1h-2zM1074 720h2v1h-2zM171 721h2v1h-2zM854 661h2v1h-2zM870 661h2v1h-2zM954 661h2v1h-2zM965 661h2v1h-2zM1025 681h2v1h-2zM852 662h2v1h-2zM954 662h2v1h-2zM965 662h2v1h-2zM950 658h2v1h-2zM968 658h2v1h-2zM764 717h2v1h-2zM989 717h2v1h-2zM97 741h2v1h-2zM100 741h2v1h-2zM248 741h2v1h-2zM726 741h2v1h-2zM785 741h2v1h-2zM794 741h2v1h-2zM833 741h2v1h-2zM764 718h2v1h-2zM989 718h2v1h-2zM332 763h3v1h-3zM338 763h2v1h-2zM372 763h4v1h-4zM448 763h2v1h-2zM459 763h6v1h-6zM849 650h2v1h-2zM1008 694h7v1h-7zM845 657h2v1h-2zM907 634h2v1h-2zM852 663h2v1h-2zM863 663h2v1h-2zM141 747h2v1h-2zM507 764h2v1h-2zM1003 687h2v1h-2zM145 725h2v1h-2zM168 725h2v1h-2zM174 725h2v1h-2zM182 725h2v1h-2zM1062 725h2v1h-2zM226 754h2v1h-2zM947 647h2v1h-2zM838 617h2v1h-2zM1000 691h2v1h-2zM145 729h2v1h-2zM219 729h2v1h-2zM230 729h2v1h-2zM981 699h2v1h-2zM1023 699h2v1h-2zM145 726h2v1h-2zM198 726h2v1h-2zM219 726h2v1h-2zM722 726h2v1h-2zM799 726h2v1h-2zM1062 726h2v1h-2zM595 700h2v1h-2zM983 700h2v1h-2zM1023 700h2v1h-2zM226 753h2v1h-2zM595 701h2v1h-2zM1023 701h2v1h-2zM230 730h2v1h-2zM614 730h2v1h-2zM917 638h2v1h-2zM145 728h2v1h-2zM219 728h2v1h-2zM230 728h2v1h-2zM616 728h3v1h-3zM627 728h3v1h-3zM838 619h2v1h-2zM838 620h2v1h-2zM950 659h2v1h-2zM914 633h2v1h-2zM920 633h2v1h-2zM906 637h2v1h-2zM866 668h2v1h-2zM940 632h2v1h-2zM652 677h2v1h-2zM842 655h3v1h-3zM944 655h2v1h-2zM652 674h2v1h-2zM947 646h2v1h-2zM103 746h2v1h-2zM764 719h2v1h-2zM772 719h2v1h-2zM859 669h2v1h-2zM652 672h2v1h-2zM1025 683h2v1h-2zM838 621h2v1h-2zM874 666h2v1h-2zM652 673h2v1h-2zM994 679h2v1h-2zM1025 679h2v1h-2zM456 765h3v1h-3zM652 676h2v1h-2zM1030 676h3v1h-3zM1027 689h2v1h-2zM838 623h2v1h-2zM652 675h2v1h-2zM838 622h2v1h-2zM838 624h2v1h-2zM838 616h2v1h-2zM838 618h2v1h-2zM153 736h1v6h-1zM1065 736h1v3h-1zM111 738h1v2h-1zM633 733h1v5h-1zM962 639h1v7h-1zM229 731h1v10h-1zM1035 700h1v16h-1zM195 735h1v4h-1zM1046 724h1v1h-1zM112 740h1v2h-1zM594 726h1v21h-1zM595 699h1v1h-1zM595 702h1v24h-1zM115 745h1v1h-1zM1036 716h1v6h-1zM1036 723h1v1h-1zM188 733h1v5h-1zM99 742h1v1h-1zM656 696h1v19h-1zM939 633h1v10h-1zM830 732h1v1h-1zM931 633h1v6h-1zM662 739h1v1h-1zM942 639h1v8h-1zM150 744h1v1h-1zM665 743h1v2h-1zM1033 677h1v8h-1zM837 625h1v40h-1zM935 636h1v8h-1zM666 745h1v1h-1zM784 735h1v4h-1zM924 630h1v2h-1zM218 732h1v6h-1zM870 660h1v1h-1zM976 677h1v8h-1zM1072 730h1v4h-1zM865 664h1v4h-1zM938 643h1v9h-1zM884 680h1v2h-1zM319 758h1v1h-1zM225 743h1v10h-1zM277 761h1v1h-1zM1062 722h1v3h-1zM892 655h1v2h-1zM730 743h1v1h-1zM179 720h1v1h-1zM904 628h1v3h-1zM985 702h1v3h-1zM1024 689h1v9h-1zM1024 702h1v2h-1zM986 705h1v4h-1zM180 721h1v2h-1zM851 653h1v8h-1zM957 641h1v10h-1zM1053 729h1v3h-1zM598 707h1v6h-1zM971 661h1v1h-1zM391 758h1v1h-1zM391 760h1v1h-1zM994 676h1v2h-1zM994 680h1v2h-1zM972 662h1v1h-1zM964 653h1v7h-1zM144 730h1v13h-1zM956 651h1v10h-1zM164 717h1v2h-1zM593 747h1v14h-1zM658 731h1v6h-1zM773 717h1v2h-1zM773 721h1v1h-1zM934 632h1v4h-1zM651 678h1v20h-1zM221 730h1v7h-1zM224 739h1v4h-1zM379 763h1v1h-1zM949 648h1v10h-1zM96 740h1v1h-1zM779 725h1v9h-1zM1034 685h1v15h-1zM944 656h1v2h-1zM923 632h1v3h-1zM869 662h1v2h-1zM780 734h1v2h-1zM780 738h1v1h-1zM227 749h1v4h-1zM850 648h1v2h-1zM850 652h1v1h-1zM741 742h1v2h-1zM459 764h1v1h-1zM585 759h1v2h-1zM652 670h1v2h-1zM937 652h1v5h-1zM842 647h1v7h-1zM842 656h1v2h-1zM1020 687h1v4h-1zM725 735h1v6h-1zM715 724h1v8h-1zM1071 734h1v5h-1zM265 752h1v4h-1zM963 646h1v7h-1zM113 742h1v2h-1zM857 665h1v1h-1zM1064 730h1v6h-1zM220 723h1v3h-1zM657 715h1v16h-1zM1045 721h1v2h-1zM311 761h1v2h-1zM303 758h1v1h-1zM232 732h1v4h-1zM601 717h1v2h-1zM1060 735h1v8h-1zM340 761h1v2h-1zM664 742h1v1h-1zM466 757h1v3h-1zM655 685h1v11h-1zM764 715h1v2h-1zM993 682h1v11h-1zM871 662h1v1h-1zM836 665h1v41h-1zM774 722h1v10h-1zM1076 721h1v7h-1zM228 741h1v8h-1zM872 663h1v2h-1zM650 698h1v21h-1zM587 759h1v2h-1zM767 724h1v3h-1zM1082 738h1v2h-1zM87 736h1v6h-1zM744 742h1v1h-1zM717 724h1v4h-1zM371 762h1v1h-1zM768 727h1v2h-1zM538 759h1v1h-1zM992 693h1v11h-1zM984 701h1v1h-1zM197 728h1v4h-1zM439 758h1v1h-1zM940 628h1v4h-1zM906 638h1v2h-1zM682 743h1v2h-1zM654 678h1v7h-1zM714 732h1v8h-1zM619 724h1v3h-1zM845 658h1v2h-1zM1052 726h1v3h-1zM649 719h1v11h-1zM925 627h1v3h-1zM219 730h1v2h-1zM189 738h1v2h-1zM928 631h1v4h-1zM898 646h1v2h-1zM212 726h1v6h-1zM89 736h1v2h-1zM204 724h1v1h-1zM739 738h1v2h-1zM1077 728h1v7h-1zM90 738h1v2h-1zM835 706h1v27h-1zM155 719h1v7h-1zM763 720h1v8h-1zM936 644h1v8h-1zM841 633h1v14h-1zM955 663h1v3h-1zM724 729h1v6h-1zM1019 683h1v4h-1zM917 637h1v1h-1zM977 685h1v8h-1zM855 662h1v1h-1zM451 758h1v1h-1zM454 763h1v1h-1zM78 741h1v2h-1zM1063 727h1v3h-1zM856 663h1v2h-1zM801 727h1v5h-1zM196 732h1v3h-1zM264 748h1v4h-1zM530 758h1v1h-1zM1022 694h1v4h-1zM859 668h1v1h-1zM991 704h1v11h-1zM618 727h1v1h-1zM1015 690h1v3h-1zM599 713h1v2h-1zM987 709h1v3h-1zM147 730h1v5h-1zM797 733h1v3h-1zM990 719h1v2h-1zM231 731h1v1h-1zM840 625h1v8h-1zM778 720h1v3h-1zM1025 674h1v4h-1zM1025 684h1v5h-1zM834 733h1v7h-1zM834 743h1v2h-1zM510 762h1v1h-1zM104 747h1v2h-1zM1029 680h1v9h-1zM766 720h1v4h-1zM1081 734h1v4h-1zM716 720h1v3h-1zM506 762h1v2h-1zM950 660h1v4h-1zM154 726h1v10h-1zM328 761h1v2h-1zM81 740h1v2h-1zM913 634h1v2h-1zM1061 727h1v8h-1zM909 635h1v4h-1zM640 740h1v1h-1zM308 761h1v1h-1zM889 662h1v6h-1zM309 762h1v1h-1zM1006 690h1v2h-1zM803 738h1v2h-1zM1057 740h1v2h-1zM711 741h1v1h-1zM464 757h1v6h-1zM141 746h1v1h-1zM262 743h1v1h-1zM263 744h1v4h-1zM961 636h1v3h-1zM1028 690h1v4h-1zM502 760h1v1h-1zM912 636h1v2h-1zM361 761h1v2h-1zM532 760h1v1h-1zM270 760h1v1h-1zM681 745h1v1h-1zM975 669h1v8h-1zM102 743h1v2h-1zM828 734h1v2h-1zM157 716h1v1h-1zM95 741h1v1h-1zM213 732h1v6h-1zM930 639h1v3h-1zM505 760h1v2h-1zM695 741h1v1h-1zM145 719h1v4h-1zM535 761h1v1h-1zM802 732h1v6h-1zM1041 717h1v1h-1zM435 758h1v1h-1zM310 763h1v1h-1zM997 683h1v3h-1zM114 744h1v1h-1zM967 659h1v2h-1zM106 740h1v1h-1zM831 734h1v3h-1zM1038 720h1v2h-1zM887 672h1v3h-1zM782 735h1v1h-1zM156 717h1v2h-1zM864 661h1v2h-1zM622 719h1v1h-1zM325 761h1v1h-1zM86 743h1v2h-1zM718 728h1v6h-1zM852 661h1v1h-1zM852 664h1v2h-1zM597 702h1v5h-1zM186 723h1v5h-1zM272 763h1v1h-1zM970 659h1v2h-1zM941 633h1v6h-1zM174 726h1v1h-1zM166 721h1v2h-1zM974 665h1v4h-1zM167 723h1v2h-1zM336 760h1v1h-1zM470 760h1v2h-1zM1059 745h1v2h-1zM294 763h1v1h-1zM929 635h1v4h-1zM590 761h1v1h-1zM697 743h1v2h-1zM1078 737h1v2h-1zM721 728h1v4h-1zM740 740h1v2h-1zM317 760h1v1h-1zM275 763h1v1h-1zM838 611h1v5h-1zM686 741h1v2h-1zM1014 693h1v1h-1zM305 763h1v1h-1zM996 680h1v3h-1zM465 755h1v2h-1zM885 677h1v3h-1zM785 739h1v2h-1zM327 763h1v1h-1zM814 738h1v1h-1zM370 761h1v1h-1zM625 722h1v2h-1zM582 760h1v1h-1zM320 759h1v2h-1zM905 631h1v6h-1zM567 758h1v1h-1zM119 747h1v1h-1zM1054 732h1v2h-1zM901 639h1v3h-1zM965 660h1v1h-1zM965 663h1v1h-1zM471 762h1v1h-1zM777 725h1v4h-1zM877 668h1v1h-1zM217 738h1v2h-1zM133 744h1v1h-1zM647 736h1v2h-1zM281 758h1v1h-1zM742 744h1v1h-1zM1017 683h1v3h-1zM692 743h1v1h-1zM684 739h1v1h-1zM911 638h1v1h-1zM908 632h1v2h-1zM536 759h1v2h-1zM360 763h1v1h-1zM266 756h1v4h-1zM187 728h1v5h-1zM858 666h1v2h-1zM761 734h1v2h-1zM566 760h1v2h-1zM304 760h1v2h-1zM390 763h1v1h-1zM94 742h1v1h-1zM953 652h1v5h-1zM547 760h1v2h-1zM322 763h1v1h-1zM861 667h1v2h-1zM273 762h1v1h-1zM760 736h1v2h-1zM569 760h1v2h-1zM352 762h1v1h-1zM1004 688h1v1h-1zM926 625h1v2h-1zM608 723h1v2h-1zM878 669h1v1h-1zM1027 684h1v5h-1zM832 737h1v3h-1zM879 670h1v1h-1zM91 740h1v3h-1zM631 726h1v1h-1zM631 728h1v1h-1zM447 760h1v2h-1zM860 670h1v1h-1zM891 657h1v2h-1zM903 631h1v4h-1zM178 721h1v1h-1zM116 746h1v1h-1zM117 747h1v1h-1zM600 715h1v2h-1zM921 634h1v1h-1zM886 675h1v2h-1zM507 765h1v1h-1zM450 760h1v2h-1zM606 721h1v1h-1zM177 722h1v2h-1zM796 736h1v4h-1zM169 724h1v1h-1zM951 652h1v6h-1zM943 647h1v7h-1zM954 657h1v4h-1zM826 737h1v1h-1zM881 673h1v2h-1zM1074 721h1v4h-1zM734 739h1v1h-1zM452 760h1v1h-1zM453 761h1v2h-1zM731 742h1v1h-1zM446 758h1v1h-1zM720 732h1v2h-1zM271 761h1v2h-1zM118 748h1v1h-1zM350 761h1v2h-1zM1002 688h1v2h-1zM301 761h1v2h-1zM168 726h1v1h-1zM946 648h1v4h-1zM1073 725h1v5h-1zM323 761h1v2h-1zM978 693h1v5h-1zM621 720h1v2h-1zM634 738h1v1h-1zM634 740h1v1h-1zM183 724h1v1h-1zM726 743h1v1h-1zM799 727h1v3h-1zM968 657h1v1h-1zM160 712h1v1h-1zM1001 690h1v1h-1zM161 713h1v1h-1zM900 642h1v2h-1zM783 732h1v2h-1zM467 760h1v2h-1zM919 634h1v4h-1zM896 649h1v2h-1zM129 743h1v1h-1zM455 764h1v1h-1zM627 727h1v1h-1zM531 759h1v1h-1zM624 721h1v1h-1zM1016 686h1v4h-1zM798 730h1v3h-1zM182 726h1v1h-1zM907 635h1v2h-1zM306 761h1v1h-1zM615 729h1v1h-1zM1056 737h1v3h-1zM205 723h1v1h-1zM337 761h1v2h-1zM583 759h1v1h-1zM690 741h1v1h-1zM890 659h1v3h-1zM610 726h1v1h-1zM163 716h1v1h-1zM603 721h1v2h-1zM298 759h1v2h-1zM545 758h1v1h-1zM848 652h1v2h-1zM762 728h1v6h-1zM626 724h1v3h-1zM321 761h1v2h-1zM533 761h1v1h-1zM534 762h1v1h-1zM181 723h1v2h-1zM267 762h1v2h-1zM1055 734h1v3h-1zM663 740h1v2h-1zM92 744h1v1h-1zM544 759h1v2h-1zM282 759h1v2h-1zM847 654h1v2h-1zM632 729h1v4h-1zM316 758h1v1h-1zM395 758h1v1h-1zM353 761h1v1h-1zM230 726h1v2h-1zM396 759h1v3h-1zM437 760h1v1h-1zM233 736h1v2h-1zM602 719h1v2h-1zM613 728h1v2h-1zM888 668h1v4h-1zM297 758h1v1h-1zM300 763h1v1h-1zM202 726h1v1h-1zM335 761h1v2h-1zM620 722h1v2h-1zM927 627h1v4h-1zM558 759h1v2h-1zM296 759h1v2h-1zM899 644h1v2h-1zM206 722h1v1h-1zM880 671h1v2h-1zM945 652h1v2h-1zM367 761h1v1h-1zM775 735h1v3h-1zM895 651h1v1h-1zM284 763h1v1h-1zM687 743h1v1h-1zM813 739h1v1h-1zM988 712h1v3h-1zM148 735h1v4h-1zM827 736h1v1h-1zM378 760h1v1h-1zM295 761h1v2h-1zM329 760h1v1h-1zM922 635h1v2h-1zM868 664h1v3h-1zM914 632h1v1h-1zM458 766h1v1h-1zM1044 719h1v2h-1zM902 635h1v4h-1zM1003 686h1v1h-1zM1007 692h1v2h-1zM755 736h1v2h-1zM105 741h1v4h-1zM607 722h1v1h-1zM713 740h1v2h-1zM713 743h1v1h-1zM948 642h1v2h-1zM302 760h1v1h-1zM999 688h1v3h-1zM101 742h1v1h-1zM771 721h1v2h-1zM648 730h1v6h-1zM143 743h1v4h-1zM586 761h1v1h-1zM867 667h1v1h-1zM362 760h1v1h-1zM226 755h1v3h-1zM1051 724h1v2h-1zM758 736h1v2h-1zM795 740h1v1h-1zM158 714h1v2h-1zM556 759h1v2h-1zM211 724h1v2h-1zM920 632h1v1h-1zM198 727h1v1h-1zM331 762h1v1h-1zM415 761h1v2h-1zM315 759h1v1h-1zM958 636h1v5h-1zM1042 715h1v1h-1zM1021 691h1v3h-1zM77 743h1v1h-1zM719 735h1v2h-1zM529 759h1v2h-1zM1005 689h1v1h-1zM429 758h1v1h-1zM609 725h1v1h-1zM998 686h1v2h-1zM149 739h1v4h-1zM776 729h1v3h-1zM1080 732h1v2h-1zM589 759h1v2h-1zM696 742h1v1h-1zM581 761h1v1h-1zM364 762h1v1h-1zM756 734h1v1h-1zM399 761h1v1h-1zM605 722h1v1h-1zM88 733h1v2h-1zM380 761h1v1h-1zM280 759h1v1h-1zM1079 734h1v1h-1zM326 762h1v1h-1zM883 678h1v2h-1zM84 740h1v1h-1zM733 740h1v1h-1zM729 741h1v2h-1zM397 763h1v1h-1zM1030 675h1v1h-1zM1030 677h1v3h-1zM952 648h1v3h-1zM1075 717h1v3h-1zM341 759h1v2h-1zM299 761h1v2h-1zM511 761h1v1h-1zM504 758h1v1h-1zM413 761h1v2h-1zM359 761h1v2h-1zM683 741h1v2h-1zM393 760h1v1h-1zM910 640h1v2h-1zM351 763h1v1h-1zM343 759h1v1h-1zM170 722h1v2h-1zM770 723h1v2h-1zM1018 681h1v2h-1zM85 741h1v1h-1zM882 675h1v3h-1zM537 758h1v1h-1zM185 720h1v2h-1zM1040 718h1v1h-1zM172 722h1v1h-1zM973 663h1v2h-1zM162 714h1v2h-1zM173 723h1v2h-1zM165 719h1v2h-1zM614 731h1v1h-1zM207 721h1v1h-1zM769 725h1v2h-1zM414 763h1v1h-1zM285 761h1v1h-1zM548 762h1v1h-1zM893 653h1v2h-1zM916 635h1v2h-1zM862 665h1v2h-1zM274 760h1v1h-1zM844 652h1v2h-1zM184 723h1v1h-1zM76 744h1v1h-1zM528 761h1v1h-1zM1043 717h1v2h-1zM176 724h1v1h-1zM873 665h1v1h-1zM376 762h1v1h-1zM539 760h1v2h-1zM440 759h1v1h-1zM171 720h1v1h-1zM307 760h1v1h-1zM194 739h1v1h-1zM604 723h1v1h-1zM520 760h1v1h-1zM152 742h1v1h-1zM546 759h1v1h-1zM140 745h1v1h-1zM584 758h1v1h-1zM83 741h1v1h-1zM915 634h1v1h-1zM732 741h1v1h-1zM918 639h1v1h-1zM121 745h1v1h-1zM394 759h1v1h-1zM159 713h1v1h-1zM523 760h1v1h-1zM557 758h1v1h-1zM283 761h1v1h-1zM82 743h1v1h-1zM1070 739h1v1h-1zM1070 741h1v1h-1zM109 738h1v1h-1zM932 630h1v1h-1zM932 632h1v1h-1zM659 737h1v1h-1zM1058 742h1v1h-1zM142 748h1v1h-1zM324 760h1v1h-1zM854 660h1v1h-1zM366 762h1v1h-1zM800 724h1v2h-1zM866 669h1v2h-1zM438 759h1v1h-1zM1039 719h1v1h-1zM522 758h1v1h-1zM559 761h1v1h-1zM293 761h1v2h-1zM897 648h1v1h-1zM130 741h1v1h-1zM203 725h1v1h-1zM80 739h1v1h-1zM214 738h1v2h-1zM1050 723h1v1h-1zM342 758h1v1h-1zM330 761h1v1h-1zM509 763h1v1h-1zM723 728h1v1h-1zM269 758h1v1h-1zM876 667h1v1h-1zM588 758h1v1h-1zM745 741h1v1h-1zM132 743h1v1h-1zM363 761h1v1h-1zM691 742h1v1h-1zM120 746h1v1h-1zM759 738h1v1h-1zM110 737h1v1h-1zM1000 692h1v1h-1zM743 743h1v1h-1zM894 652h1v1h-1zM863 664h1v1h-1zM79 740h1v1h-1zM728 740h1v1h-1zM637 738h1v1h-1zM468 758h1v1h-1zM365 763h1v1h-1z" fill="#ffff00" shape-rendering="crispEdges"/>
<path d="M940 781h1v1h-1zM943 780h1v2h-1zM941 780h1v1h-1zM942 779h1v1h-1z" fill="#ff0000" shape-rendering="crispEdges"/>
<path d="M960 778h1v2h-1zM958 778h1v2h-1zM956 781h1v1h-1zM961 780h1v2h-1zM959 777h1v1h-1zM957 780h1v1h-1z" fill="#ff0000" shape-rendering="crispEdges"/>
<text x="24.5" y="841.6" font-size="12" fill="#000" textLength="99" lengthAdjust="spacingAndGlyphs" >Remaining Battery:</text>
<rect x="136" y="826" width="80" height="24" fill="#000" />
<text x="176" y="840.7" font-size="11" fill="#00ff00" textLength="37" lengthAdjust="spacingAndGlyphs" text-anchor="middle" >AC Line</text>
<text x="239.5" y="841.6" font-size="12" fill="#000" textLength="63" lengthAdjust="spacingAndGlyphs" >Test Started:</text>
<rect x="314" y="826" width="140" height="24" fill="#000" />
<text x="383.8" y="840.7" font-size="11" fill="#00ff00" textLength="99" lengthAdjust="spacingAndGlyphs" text-anchor="middle" >24.05.2023 22:52:19</text>
<text x="478" y="841.6" font-size="12" fill="#000" textLength="71.3" lengthAdjust="spacingAndGlyphs" >Elapsed Time:</text>
<rect x="562" y="826" width="80" height="24" fill="#000" />
<text x="601.8" y="840.7" font-size="11" fill="#00ff00" textLength="42.5" lengthAdjust="spacingAndGlyphs" text-anchor="middle" >00:08:27</text>
<rect x="10.5" y="872.5" width="71" height="19.5" rx="3" fill="#f6f6f6" stroke="#e8e8e8"/>
<text x="45.5" y="887" font-size="12" fill="#8d8d8d" textLength="29" lengthAdjust="spacingAndGlyphs" text-anchor="middle" >Start</text>
<rect x="90.5" y="872.5" width="72" height="19.5" rx="3" fill="#fdfdfd" stroke="#d0d0d0"/>
<text x="126.0" y="887" font-size="12" fill="#000" textLength="24.3" lengthAdjust="spacingAndGlyphs" text-anchor="middle" >Stop</text>
<rect x="194.5" y="872.5" width="72" height="19.5" rx="3" fill="#fdfdfd" stroke="#d0d0d0"/>
<text x="230.0" y="887" font-size="12" fill="#000" textLength="26" lengthAdjust="spacingAndGlyphs" text-anchor="middle" >Clear</text>
<rect x="275.5" y="872.5" width="72" height="19.5" rx="3" fill="#fdfdfd" stroke="#d0d0d0"/>
<text x="311.0" y="887" font-size="12" fill="#000" textLength="24" lengthAdjust="spacingAndGlyphs" text-anchor="middle" >Save</text>
<rect x="379.5" y="872.5" width="72" height="19.5" rx="3" fill="#fdfdfd" stroke="#d0d0d0"/>
<text x="415.0" y="887" font-size="12" fill="#000" textLength="32" lengthAdjust="spacingAndGlyphs" text-anchor="middle" >CPUID</text>
<rect x="460.5" y="872.5" width="72" height="19.5" rx="3" fill="#fdfdfd" stroke="#d0d0d0"/>
<text x="496.0" y="887" font-size="12" fill="#000" textLength="61" lengthAdjust="spacingAndGlyphs" text-anchor="middle" >Preferences</text>
<rect x="1075.5" y="872.5" width="71" height="19.5" rx="3" fill="#f6f6f6" stroke="#e8e8e8"/>
<text x="1110.5" y="887" font-size="12" fill="#8d8d8d" textLength="29" lengthAdjust="spacingAndGlyphs" text-anchor="middle" >Close</text>
</svg></body></html>
